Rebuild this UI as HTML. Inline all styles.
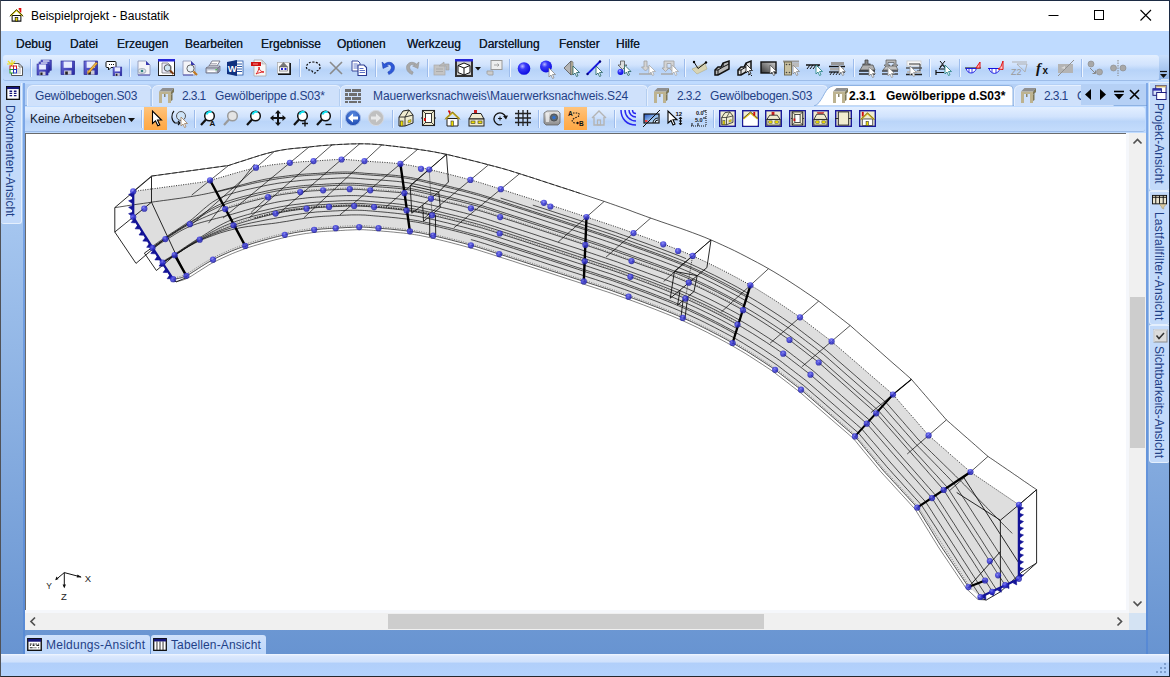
<!DOCTYPE html>
<html lang="de">
<head>
<meta charset="utf-8">
<title>Beispielprojekt - Baustatik</title>
<style>
*{box-sizing:border-box;margin:0;padding:0}
html,body{width:1170px;height:677px;overflow:hidden;background:#6b97d2;font-family:"Liberation Sans","DejaVu Sans",sans-serif;font-size:12px;color:#000}
#win{position:absolute;left:0;top:0;width:1170px;height:677px;background:linear-gradient(to bottom,#b9d6f9 81px,#6894d1 652px);border:1px solid #1c2b44;border-left-color:#505258;border-bottom-color:#26282c;overflow:hidden}
.edge{position:absolute;top:82px;width:2px;height:571px;background:rgba(70,125,215,.5)}
.abs{position:absolute}
svg{position:absolute;overflow:visible}
#title{left:0;top:0;width:1168px;height:30px;background:#fff}
#title .t{left:30px;top:8px;font-size:12px;color:#000}
#menu{left:0;top:30px;width:1168px;height:25px;background:#bfdbff}
#menu span{position:absolute;top:6px;font-size:12px;color:#15202f;text-shadow:0 0 0.4px #15202f}
#tb1{left:0;top:55px;width:1168px;height:28px;background:#bfdbff}
#tb1 .in{left:2px;top:-1px;width:1156px;height:25px;border-radius:3px;background:linear-gradient(#e3efff 0%,#d1e3fd 40%,#b7d3f8 60%,#c4dcfc 100%);box-shadow:0 1px 0 #9dbce8}
#tb1 .opt{left:1158px;top:-1px;width:10px;height:25px;background:linear-gradient(#c9dffc,#8fb4e6);border-radius:0 3px 3px 0}
.sep{position:absolute;width:2px;height:18px;top:4px;border-left:1px solid #9dbcec;border-right:1px solid #eef5ff}
#tabs{left:24px;top:83px;width:1122px;height:22px;background:#b5d0f5}
.tab{position:absolute;top:1px;height:21px;font-size:12px;color:#1f3f86;white-space:pre}
.tab span{position:absolute;top:4px}
#tb2{left:24px;top:105px;width:1122px;height:27px;background:#bfdbff}
#tb2 .in{left:0px;top:1px;width:1120px;height:24px;border-radius:0 3px 3px 0;background:linear-gradient(#e3efff 0%,#d1e3fd 40%,#bad5f9 60%,#c4dcfc 100%);box-shadow:0 1px 0 #9dbce8}
.hot{position:absolute;top:1px;width:23px;height:23px;background:linear-gradient(#ffc47c,#ffb35c 50%,#ffa844);}
#canvas{left:24px;top:132px;width:1101px;height:477px;background:#fff;border-left:1px solid #6a6a6a;border-top:1px solid #6a6a6a;overflow:hidden}
#strip{left:24px;top:132px;width:1104px;height:480px;background:#f5f7fb}
#vs{left:1128px;top:132px;width:17px;height:480px;background:#f0f0f0}
#hs{left:24px;top:612px;width:1104px;height:17px;background:#f0f0f0}
.thumb{position:absolute;background:#cdcdcd}
#corner{left:1128px;top:612px;width:17px;height:17px;background:#d4e3f3}
#status{left:0;top:653px;width:1168px;height:22px;background:linear-gradient(#f2f7ff 0,#dbe8fd 2px,#cfe1fc 36%,#b1cffa 42%,#b4d3fd 100%)}
.vt{position:absolute;background:#c3dafa;border:1px solid #e4effd;border-radius:0 0 3px 3px}
.vt span{position:absolute;writing-mode:vertical-rl;font-size:12px;color:#1f3f86;white-space:pre;left:2px}
.btab{position:absolute;top:634px;height:20px;background:linear-gradient(#cfe1fb,#bcd6fa);border-radius:3px 3px 0 0;font-size:12px;color:#1f3f86}
.btab span{position:absolute;top:3px}
</style>
</head>
<body>
<div id="win">
  <div id="title" class="abs">
    <svg style="left:8px;top:7px" width="15" height="14" viewBox="0 0 17 16"><path d="M11 1h2v4" stroke="#e01010" stroke-width="2" fill="none"/><path d="M3.500 8.500h10V15h-10z" fill="#fff" stroke="#111" stroke-width="1.200"/><path d="M1.500 9L8.500 2.500 15.500 9" fill="none" stroke="#f0e000" stroke-width="1.600"/><path d="M.8 9.500L8.500 2 16.200 9.500" fill="none" stroke="#111" stroke-width="1"/><rect x="7" y="11" width="3" height="4" fill="#f0e000" stroke="#111" stroke-width=".8"/></svg>
    <span class="abs t">Beispielprojekt - Baustatik</span>
    <svg style="left:1047px;top:6px" width="110" height="16" viewBox="0 0 110 16" fill="none" stroke="#000" stroke-width="1"><path d="M0.500 8.500H10.500"/><rect x="46.500" y="3.500" width="9" height="9"/><path d="M92.500 3L103 13.500M103 3L92.500 13.500" stroke-width="1.1"/></svg>
  </div>
  <div id="menu" class="abs">
    <span style="left:15px">Debug</span><span style="left:69px">Datei</span><span style="left:116px">Erzeugen</span><span style="left:184px">Bearbeiten</span><span style="left:260px">Ergebnisse</span><span style="left:336px">Optionen</span><span style="left:406px">Werkzeug</span><span style="left:478px">Darstellung</span><span style="left:558px">Fenster</span><span style="left:615px">Hilfe</span>
  </div>
  <div id="tb1" class="abs"><div class="abs in"></div><div class="abs opt"></div>
  <svg width="0" height="0"><defs><linearGradient id="fl" x1="0" y1="0" x2="1" y2="1"><stop offset="0" stop-color="#7070dc"/><stop offset="1" stop-color="#2626a0"/></linearGradient><radialGradient id="bl" cx="38%" cy="32%" r="70%"><stop offset="0" stop-color="#b8b8ff"/><stop offset=".35" stop-color="#3a3af8"/><stop offset="1" stop-color="#0a0ae0"/></radialGradient></defs></svg>
<svg style="left:6px;top:4px" width="16" height="16" viewBox="0 0 16 16"><path d="M4.500 3.500h7.500l3.500 3.500v8.500h-11z" fill="#fff" stroke="#555" stroke-width="1"/><path d="M12 3.500v3.500h3.500" fill="none" stroke="#555" stroke-width=".8"/><path d="M10 9h4M10 11h4M10 13h4" stroke="#999" stroke-width=".8"/><rect x="3" y="6" width="3.5" height="3.5" fill="#fff" stroke="#d02020"/><rect x="6.5" y="6" width="3" height="3.5" fill="#fff" stroke="#d02020"/><rect x="3" y="9.5" width="3.5" height="3.5" fill="#fff" stroke="#20a020"/><rect x="6.5" y="9.5" width="3" height="3.5" fill="#fff" stroke="#2030c0"/><path d="M1 1l4 4M5 0v5M0 4h5M8 1l-3 4" stroke="#f0e020" stroke-width="1.2"/></svg>
<div class="sep" style="left:29px;top:3px;height:18px"></div>
<svg style="left:36px;top:4px" width="16" height="16" viewBox="0 0 16 16"><g transform="translate(4 0) scale(0.8)"><rect x="0" y="0" width="13" height="13" fill="url(#fl)" stroke="#24248e" stroke-width=".6"/><rect x="2.5" y="0.5" width="8" height="6" fill="#e8ecff"/><rect x="3" y="9" width="7" height="4" fill="#c8c8d8"/><rect x="4" y="10" width="2.5" height="3" fill="#222"/></g><g transform="translate(2 2) scale(0.8)"><rect x="0" y="0" width="13" height="13" fill="url(#fl)" stroke="#24248e" stroke-width=".6"/><rect x="2.5" y="0.5" width="8" height="6" fill="#e8ecff"/><rect x="3" y="9" width="7" height="4" fill="#c8c8d8"/><rect x="4" y="10" width="2.5" height="3" fill="#222"/></g><g transform="translate(0 4) scale(0.85)"><rect x="0" y="0" width="13" height="13" fill="url(#fl)" stroke="#24248e" stroke-width=".6"/><rect x="2.5" y="0.5" width="8" height="6" fill="#e8ecff"/><rect x="3" y="9" width="7" height="4" fill="#c8c8d8"/><rect x="4" y="10" width="2.5" height="3" fill="#222"/></g></svg>
<svg style="left:59px;top:4px" width="16" height="16" viewBox="0 0 16 16"><g transform="translate(1 1) scale(1.05)"><rect x="0" y="0" width="13" height="13" fill="url(#fl)" stroke="#24248e" stroke-width=".6"/><rect x="2.5" y="0.5" width="8" height="6" fill="#e8ecff"/><rect x="3" y="9" width="7" height="4" fill="#c8c8d8"/><rect x="4" y="10" width="2.5" height="3" fill="#222"/></g></svg>
<svg style="left:82px;top:4px" width="16" height="16" viewBox="0 0 16 16"><g transform="translate(1 1) scale(1.05)"><rect x="0" y="0" width="13" height="13" fill="url(#fl)" stroke="#24248e" stroke-width=".6"/><rect x="2.5" y="0.5" width="8" height="6" fill="#e8ecff"/><rect x="3" y="9" width="7" height="4" fill="#c8c8d8"/><rect x="4" y="10" width="2.5" height="3" fill="#222"/></g><path d="M14.5 3.5l-8 9-2 1 .5-2.2 8-9z" fill="#f4b942" stroke="#a86810" stroke-width=".7"/></svg>
<svg style="left:105px;top:4px" width="16" height="16" viewBox="0 0 16 16"><path d="M1 1.5h8a1 1 0 011 1v4a1 1 0 01-1 1H5l-2.5 2.5V7.500H1a1 1 0 01-1-1v-4a1 1 0 011-1z" fill="#fff" stroke="#111" stroke-width="1"/><path d="M3 4.500h1M5 4.500h1M7 4.500h1" stroke="#111"/><g transform="translate(7 7) scale(0.68)"><rect x="0" y="0" width="13" height="13" fill="url(#fl)" stroke="#24248e" stroke-width=".6"/><rect x="2.5" y="0.5" width="8" height="6" fill="#e8ecff"/><rect x="3" y="9" width="7" height="4" fill="#c8c8d8"/><rect x="4" y="10" width="2.5" height="3" fill="#222"/></g></svg>
<div class="sep" style="left:128px;top:3px;height:18px"></div>
<svg style="left:135px;top:4px" width="16" height="16" viewBox="0 0 16 16"><path d="M2 1h8l4 4v10H2z" fill="#f4f4f8" stroke="#8890b0" stroke-width=".8"/><path d="M10 1v4h4z" fill="#3838b0"/><ellipse cx="6" cy="11" rx="4" ry="2.5" fill="#e0e4ea" stroke="#8a98a8" stroke-width=".7"/><circle cx="6" cy="11" r="1.3" fill="#308080"/><path d="M2 15h12" stroke="#5050b0" stroke-width="1"/></svg>
<svg style="left:157px;top:3px" width="18" height="18" viewBox="0 0 18 18"><rect x=".5" y=".5" width="16" height="16" fill="#fff" stroke="#222" stroke-width="1"/><rect x="0" y="0" width="17" height="2.500" fill="#2828d8"/><path d="M4 4h6l3 3v7H4z" fill="#eef" stroke="#666" stroke-width=".7"/><circle cx="9.500" cy="9" r="3.300" fill="#cfe6f4" stroke="#555" stroke-width="1"/><path d="M12 11.500l3.500 3.500" stroke="#7a3a10" stroke-width="2"/></svg>
<svg style="left:181px;top:4px" width="16" height="16" viewBox="0 0 16 16"><path d="M1 1h8l4 4v10H1z" fill="#f4f4f8" stroke="#8890b0" stroke-width=".8"/><path d="M9 1v4h4z" fill="#3838b0"/><circle cx="8.500" cy="8.500" r="3.600" fill="#eaf2f8" stroke="#666" stroke-width="1"/><path d="M11.500 11.500l3.500 3.500" stroke="#c07820" stroke-width="2.200"/><path d="M1 15h10" stroke="#5050b0"/></svg>
<svg style="left:204px;top:4px" width="16" height="16" viewBox="0 0 16 16"><path d="M4 6l3-5h8l-3 5z" fill="#fff" stroke="#667" stroke-width=".8"/><path d="M6 3.500h6M5.500 5h6" stroke="#889" stroke-width=".6"/><path d="M1 8l3-2h11l-2 2z" fill="#d8dde8" stroke="#778" stroke-width=".7"/><path d="M1 8h12v5H1z" fill="#c4cad8" stroke="#667" stroke-width=".8"/><path d="M13 8l2-2v5l-2 2z" fill="#9aa4b8" stroke="#667" stroke-width=".7"/><rect x="2.500" y="10.500" width="8" height="1.500" fill="#fff"/><rect x="10.500" y="9" width="1.300" height="1.300" fill="#30c030"/></svg>
<svg style="left:226px;top:4px" width="16" height="16" viewBox="0 0 16 16"><rect x="8" y="1" width="8" height="14" fill="#fff" stroke="#2a58a8" stroke-width=".8"/><path d="M10 4h5M10 6.500h5M10 9h5M10 11.500h5" stroke="#2a58a8" stroke-width="1"/><path d="M0 2l10-2v16l-10-2z" fill="#10307e"/><text x="0.800" y="12" font-family="Liberation Sans,sans-serif" font-weight="bold" font-size="9.500" fill="#fff">W</text></svg>
<svg style="left:250px;top:4px" width="16" height="16" viewBox="0 0 16 16"><path d="M3 0h8l4 4v12H3z" fill="#f6f6f6" stroke="#aaa" stroke-width=".8"/><path d="M11 0v4h4z" fill="#ddd" stroke="#aaa" stroke-width=".6"/><rect x="0" y="2" width="10" height="4" fill="#d01010"/><path d="M2 4h5" stroke="#ffb0b0" stroke-width=".8"/><path d="M5 14c2-2 3-5 3-7 0 3 2 5 5 5-3 0-6 1-8 2z" fill="none" stroke="#e02020" stroke-width="1"/></svg>
<svg style="left:275px;top:4px" width="16" height="16" viewBox="0 0 16 16"><rect x="1.500" y="2.500" width="12" height="11" fill="#f6f6f6" stroke="#aaa" stroke-width=".7"/><path d="M14.200 3v11.300H2" stroke="#111" stroke-width="1.500" fill="none"/><path d="M3 7l4.500-5L12 7z" fill="#777"/><rect x="3.500" y="7" width="8" height="4" fill="#fff" stroke="#555" stroke-width=".6"/><rect x="5" y="8" width="2" height="2" fill="#2020d0"/><rect x="8.500" y="8" width="2" height="2" fill="#2020d0"/></svg>
<div class="sep" style="left:298px;top:3px;height:18px"></div>
<svg style="left:304px;top:4px" width="16" height="16" viewBox="0 0 16 16"><path d="M2 9c-2-3 1-7 6-7s8 3 7 6-3 2-4 4-3 1-4-1-3 0-5-2z" fill="none" stroke="#111" stroke-width="1.200" stroke-dasharray="2 1.500"/></svg>
<svg style="left:327px;top:4px" width="16" height="16" viewBox="0 0 16 16"><path d="M2 2l12 12M14 2L2 14" stroke="#8a8a8a" stroke-width="1.600"/></svg>
<svg style="left:350px;top:4px" width="16" height="16" viewBox="0 0 16 16"><path d="M1 1h6l2 2v8H1z" fill="#fff" stroke="#3a4a9c" stroke-width="1"/><path d="M2.500 4h4M2.500 6h5M2.500 8h5" stroke="#5a70c8" stroke-width=".9"/><path d="M7 5h6l2.500 2.500v8H7z" fill="#fff" stroke="#2a3a90" stroke-width="1.100"/><path d="M8.500 8.500h4M8.500 10.500h5.500M8.500 12.500h5.500" stroke="#4a60c0" stroke-width=".9"/></svg>
<div class="sep" style="left:374px;top:3px;height:18px"></div>
<svg style="left:380px;top:4px" width="16" height="16" viewBox="0 0 16 16"><path d="M1 2l1 6.500 5.500-2.500-2.200-.8c2-1.500 5-.5 5 2.300 0 2-1.500 3.500-3.500 4.500l1 2.500c4-1.500 5.700-4 5.700-7 0-5-6-7-10-3.500z" fill="#2d58d8" stroke="#1838a8" stroke-width=".5"/></svg>
<svg style="left:403px;top:4px" width="16" height="16" viewBox="0 0 16 16"><path d="M15 2l-1 6.500-5.500-2.500 2.200-.8c-2-1.500-5-.5-5 2.300 0 2 1.500 3.500 3.500 4.500l-1 2.500c-4-1.500-5.700-4-5.700-7 0-5 6-7 10-3.500z" fill="#a8a8a8" stroke="#8c8c8c" stroke-width=".5"/></svg>
<div class="sep" style="left:426px;top:3px;height:18px"></div>
<svg style="left:432px;top:4px" width="16" height="16" viewBox="0 0 16 16"><rect x="1" y="5" width="11" height="10" fill="#c4c4c4" stroke="#aaa" stroke-width=".7"/><path d="M3 9h7M3 11.500h7" stroke="#aaa"/><path d="M6 6l5-4v2h5v6h-3V6z" fill="#b8b8b8" stroke="#a0a0a0" stroke-width=".6"/></svg>
<svg style="left:454px;top:3px" width="28" height="18" viewBox="0 0 28 18"><rect x="1" y="1" width="16" height="16" fill="#cfcfcf" stroke="#333" stroke-width="2"/><rect x="0" y="0" width="18" height="2.500" fill="#2828d8"/><path d="M9 4l6 2.500v7L9 16l-6-2.500v-7z" fill="#fff" stroke="#111" stroke-width="1"/><path d="M3 6.500L9 9l6-2.500M9 9v7" fill="none" stroke="#111" stroke-width="1"/><path d="M20 8h6l-3 3.500z" fill="#111"/></svg>
<svg style="left:485px;top:4px" width="16" height="16" viewBox="0 0 16 16"><rect x="5" y="0.500" width="11" height="9" fill="#eee" stroke="#999" stroke-width="1"/><path d="M8 5h5l-1.500-1.500M13 5l-1.500 1.500" fill="none" stroke="#999" stroke-width=".9"/><path d="M1 11h6v4H2.500L1 13.500z" fill="#ccc" stroke="#999" stroke-width=".8"/></svg>
<div class="sep" style="left:508px;top:3px;height:18px"></div>
<svg style="left:515px;top:4px" width="16" height="16" viewBox="0 0 16 16"><circle cx="8" cy="8.500" r="6.300" fill="url(#bl)"/></svg>
<svg style="left:538px;top:4px" width="16" height="16" viewBox="0 0 16 16"><circle cx="7" cy="6.500" r="6" fill="url(#bl)"/><path d="M10 8l0 9 2-2 1.5 3.5 1.5-.7-1.5-3.3 3 0z" fill="#fff" stroke="#888" stroke-width=".8"/></svg>
<svg style="left:562px;top:4px" width="16" height="16" viewBox="0 0 16 16"><path d="M1 8l7-7v14z" fill="#b4b4b4" stroke="#555" stroke-width=".8"/><path d="M8 1v14l2-1V2z" fill="#cfc5a8" stroke="#555" stroke-width=".6"/><path d="M10 6l0 9 2-2 1.5 3.5 1.5-.7-1.5-3.3 3 0z" fill="#fff" stroke="#206060" stroke-width=".8"/></svg>
<svg style="left:585px;top:4px" width="16" height="16" viewBox="0 0 16 16"><path d="M1.500 14L14 1.500" stroke="#1818e0" stroke-width="1.800"/><circle cx="1.500" cy="14" r="1.200" fill="#000080"/><circle cx="14" cy="1.500" r="1.200" fill="#000080"/><path d="M10 6l0 9 2-2 1.5 3.5 1.5-.7-1.5-3.3 3 0z" fill="#fff" stroke="#206060" stroke-width=".8"/></svg>
<div class="sep" style="left:608px;top:3px;height:18px"></div>
<svg style="left:615px;top:4px" width="16" height="16" viewBox="0 0 16 16"><path d="M4.500 1h4v4h2.500l-4.500 4.500L2 5h2.500z" fill="#ddd" stroke="#555" stroke-width=".8"/><circle cx="4.500" cy="12" r="3" fill="url(#bl)"/><path d="M8.5 5l0 9 2-2 1.5 3.5 1.5-.7-1.5-3.3 3 0z" fill="#fff" stroke="#206060" stroke-width=".8"/></svg>
<svg style="left:638px;top:4px" width="16" height="16" viewBox="0 0 16 16"><path d="M5 1h3v6h2.500L6.500 11 2.500 7H5z" fill="#d4d4d4" stroke="#a0a0a0" stroke-width=".8"/><path d="M0 14h14" stroke="#a8a8a8" stroke-width="1.500"/><path d="M10 5l0 9 2-2 1.5 3.5 1.5-.7-1.5-3.3 3 0z" fill="#fff" stroke="#aaa" stroke-width=".8"/></svg>
<svg style="left:660px;top:4px" width="16" height="16" viewBox="0 0 16 16"><path d="M3 1h10v7h2l-3.500 3.500L8 8h2V3.500H6V8h2l-3.500 3.500L1 8h2z" fill="#d4d4d4" stroke="#a0a0a0" stroke-width=".8"/><path d="M0 14h12" stroke="#a8a8a8" stroke-width="1.500"/><path d="M11 5l0 9 2-2 1.5 3.5 1.5-.7-1.5-3.3 3 0z" fill="#fff" stroke="#aaa" stroke-width=".8"/></svg>
<div class="sep" style="left:683px;top:3px;height:18px"></div>
<svg style="left:690px;top:4px" width="16" height="16" viewBox="0 0 16 16"><path d="M1 9l5 5 10-5-2-6-8 4z" fill="#d8d4b4" stroke="#b4ac84" stroke-width=".6"/><path d="M3 2l4 6.500L15 2.500" fill="none" stroke="#111" stroke-width="1"/><circle cx="3" cy="2" r="1.200"/><circle cx="15" cy="2.500" r="1.200"/></svg>
<svg style="left:713px;top:4px" width="16" height="16" viewBox="0 0 16 16"><path d="M1 10l3-3h3l2-4 6-2v8l-11 6h-3z" fill="#b8b8b8" stroke="#111" stroke-width="1.500"/><path d="M1 10h3v5M4 10l5-3 .3-4M9 7l6-3" fill="none" stroke="#111" stroke-width="1"/></svg>
<svg style="left:736px;top:4px" width="16" height="16" viewBox="0 0 16 16"><path d="M1 10l3-3h3l2-4 5-2v8l-10 6h-3z" fill="#e0e0e0" stroke="#111" stroke-width="1.500"/><path d="M1 10h3v5M4 10l5-3 .3-4" fill="none" stroke="#111" stroke-width="1"/><path d="M9 4l0 9 2-2 1.5 3.5 1.5-.7-1.5-3.3 3 0z" fill="#fff" stroke="#111" stroke-width=".8"/><path d="M11 15l2-1M14 16l1-1" stroke="#111"/></svg>
<svg style="left:759px;top:4px" width="16" height="16" viewBox="0 0 16 16"><defs><linearGradient id="dr" x1="0" y1="1" x2="1" y2="0"><stop offset="0" stop-color="#333"/><stop offset="1" stop-color="#d0d0d0"/></linearGradient></defs><rect x="1" y="2" width="15" height="11" fill="url(#dr)" stroke="#111" stroke-width="1.400"/><path d="M10 5l0 9 2-2 1.5 3.5 1.5-.7-1.5-3.3 3 0z" fill="#fff" stroke="#555" stroke-width=".8"/></svg>
<svg style="left:782px;top:4px" width="16" height="16" viewBox="0 0 16 16"><path d="M0 1.500h16" stroke="#999" stroke-width="2"/><rect x="1.500" y="2" width="7" height="13" fill="#c8c0a0" stroke="#6a6448" stroke-width=".9"/><circle cx="3.500" cy="4.500" r=".8" fill="#444"/><circle cx="6.500" cy="4.500" r=".8" fill="#444"/><circle cx="3.500" cy="12.500" r=".8" fill="#444"/><circle cx="6.500" cy="12.500" r=".8" fill="#444"/><rect x="9" y="3" width="7" height="4" fill="#bbb"/><path d="M10 5l0 9 2-2 1.5 3.5 1.5-.7-1.5-3.3 3 0z" fill="#fff" stroke="#888" stroke-width=".8"/></svg>
<svg style="left:805px;top:4px" width="16" height="16" viewBox="0 0 16 16"><path d="M0 5h14" stroke="#111" stroke-width="1.500"/><path d="M1 9l3-4M4 9l3-4M7 9l3-4M10 9l3-4" stroke="#111" stroke-width="1"/><path d="M10 5l0 9 2-2 1.5 3.5 1.5-.7-1.5-3.3 3 0z" fill="#fff" stroke="#208080" stroke-width=".8"/></svg>
<svg style="left:828px;top:4px" width="16" height="16" viewBox="0 0 16 16"><path d="M2 2h13v3H2z" fill="#999"/><path d="M0 6.500h16" stroke="#111" stroke-width="1.500"/><rect x="1" y="8" width="14" height="2.500" fill="#aaa"/><path d="M0 12h16" stroke="#111" stroke-width="1.300"/><path d="M1 15l2-3M4 15l2-3M7 15l2-3M10 15l2-3" stroke="#111" stroke-width=".9"/><path d="M10 5l0 9 2-2 1.5 3.5 1.5-.7-1.5-3.3 3 0z" fill="#fff" stroke="#888" stroke-width=".8"/></svg>
<div class="sep" style="left:852px;top:3px;height:18px"></div>
<svg style="left:858px;top:4px" width="16" height="16" viewBox="0 0 16 16"><path d="M6 0h3v4h2.500L7.500 8 3.500 4H6z" fill="#888" stroke="#333" stroke-width=".7"/><path d="M1 10l3-5h10l2 5z" fill="#b0b0b0" stroke="#444" stroke-width=".7"/><path d="M0 11h16M0 14h16" stroke="#222" stroke-width="1.600"/><path d="M10 7l0 9 2-2 1.5 3.5 1.5-.7-1.5-3.3 3 0z" fill="#fff" stroke="#888" stroke-width=".8"/></svg>
<svg style="left:881px;top:4px" width="16" height="16" viewBox="0 0 16 16"><path d="M4 0h10v5h2l-3 3-3-3h2V2.500H6V5h2L5 8 2 5h2z" fill="#b8b8b8" stroke="#555" stroke-width=".7"/><path d="M1 10l3-4h10l2 4z" fill="#c0c0c0" stroke="#555" stroke-width=".7"/><path d="M0 11h16M0 14h16" stroke="#444" stroke-width="1.500"/><path d="M6 7l0 9 2-2 1.5 3.5 1.5-.7-1.5-3.3 3 0z" fill="#fff" stroke="#999" stroke-width=".8"/></svg>
<svg style="left:905px;top:4px" width="16" height="16" viewBox="0 0 16 16"><rect x="1" y="1" width="14" height="5" fill="#f8f8f8" stroke="#ccc" stroke-width=".8"/><path d="M3 4h11v7h-3l1.500 1.500" fill="none" stroke="#333" stroke-width="1"/><path d="M0 8h16" stroke="#555" stroke-width="1.500"/><path d="M1 11h14v2H1z" fill="#bbb"/><path d="M0 14.500h16" stroke="#222" stroke-width="1.500"/><path d="M4 6l0 9 2-2 1.5 3.5 1.5-.7-1.5-3.3 3 0z" fill="#fff" stroke="#999" stroke-width=".8"/></svg>
<div class="sep" style="left:928px;top:3px;height:18px"></div>
<svg style="left:934px;top:4px" width="16" height="16" viewBox="0 0 16 16"><path d="M1 10v5M1 12.500h8" stroke="#111" stroke-width="1.200" fill="none"/><path d="M5 1l5 6M10 1L5 7M4 9h7l-3.500-4z" stroke="#111" stroke-width="1" fill="none"/><path d="M10 5l0 9 2-2 1.5 3.5 1.5-.7-1.5-3.3 3 0z" fill="#fff" stroke="#208080" stroke-width=".8"/></svg>
<div class="sep" style="left:958px;top:3px;height:18px"></div>
<svg style="left:964px;top:4px" width="16" height="16" viewBox="0 0 16 16"><path d="M0 8h16" stroke="#111" stroke-width="1"/><path d="M1 8.500c2 6 8 6 10.500 0z" fill="#fff" stroke="#1010e0" stroke-width=".9"/><path d="M4 8.500v4M7 8.500v4.500" stroke="#1010e0" stroke-width=".8"/><path d="M11 8l4-6v6z" fill="#ffb0b0" stroke="#e01010" stroke-width="1"/></svg>
<svg style="left:987px;top:4px" width="16" height="16" viewBox="0 0 16 16"><path d="M1 8.500c2 6.500 9 6.500 11 0z" fill="#fff" stroke="#1010e0" stroke-width=".9"/><path d="M0 8.500h12" stroke="#1010e0" stroke-width=".9"/><path d="M4 8.500v4M8 8.500v4.500" stroke="#1010e0" stroke-width=".8"/><path d="M10 9c2-1 3-2 3.500-4l1.500-4v8.500z" fill="#ffd0d0" stroke="#e01010" stroke-width="1"/></svg>
<svg style="left:1010px;top:4px" width="16" height="16" viewBox="0 0 16 16"><path d="M1 2h15M6 4h10" stroke="#b0b0b0" stroke-width="1.200"/><path d="M6 4c2 3 5 4 8 8l2-8" fill="none" stroke="#b0b0b0" stroke-width="1"/><text x="0" y="15" font-family="Liberation Sans,sans-serif" font-size="9" fill="#999">Z2</text></svg>
<svg style="left:1034px;top:4px" width="16" height="16" viewBox="0 0 16 16"><text x="1" y="13" font-family="Liberation Serif,serif" font-style="italic" font-weight="bold" font-size="15" fill="#111">f</text><text x="7.500" y="13.500" font-family="Liberation Sans,sans-serif" font-weight="bold" font-size="10" fill="#111">x</text></svg>
<svg style="left:1057px;top:4px" width="16" height="16" viewBox="0 0 16 16"><rect x="0" y="4" width="15" height="9" fill="#b4b4b4"/><path d="M0 16L16 0" stroke="#909090" stroke-width="1"/><path d="M3 8l4-2v3z" fill="#d8d8d8"/></svg>
<div class="sep" style="left:1080px;top:3px;height:18px"></div>
<svg style="left:1086px;top:4px" width="16" height="16" viewBox="0 0 16 16"><circle cx="4" cy="4" r="3" fill="#a8a8a8" stroke="#888" stroke-width=".6"/><circle cx="12.500" cy="12" r="3" fill="#a8a8a8" stroke="#888" stroke-width=".6"/><path d="M3 8l5.500 5.500M8.500 13.500v-3M8.500 13.500h-3" stroke="#888" stroke-width="1" fill="none"/></svg>
<svg style="left:1109px;top:4px" width="16" height="16" viewBox="0 0 16 16"><circle cx="3.500" cy="8" r="3" fill="#a8a8a8" stroke="#888" stroke-width=".6"/><circle cx="13" cy="8" r="3" fill="#a8a8a8" stroke="#888" stroke-width=".6"/><path d="M8 0v16" stroke="#888" stroke-width="1" stroke-dasharray="1.500 1"/></svg>
<svg style="left:1159px;top:15px" width="7" height="9" viewBox="0 0 7 9"><path d="M0 0.500h7" stroke="#111" stroke-width="1.200"/><path d="M0 3h7L3.500 7z" fill="#111"/><path d="M1 8.500h7" stroke="#fff" stroke-width=".8" opacity=".8"/></svg>
  </div>
  <div id="tabs" class="abs">
  <div class="abs" style="left:0;top:21px;width:1122px;height:1px;background:#8db2e3"></div>
<div class="tab" style="left:2px;width:124px;"><svg style="left:0;top:0" width="126" height="21" viewBox="0 0 126 21"><path d="M.5 21V6Q.5 1 6 .5H120 Q124 .5 124 4V21" fill="#cfe1fb" stroke="#e6f0fe" stroke-width="1"/><path d="M124 4V21" stroke="#8db2e3" stroke-width="1"/></svg><span style="left:8px;letter-spacing:-0.2px">Gewölbebogen.S03</span></div>
<div class="tab" style="left:127px;width:188px;"><svg style="left:0;top:0" width="190" height="21" viewBox="0 0 190 21"><path d="M.5 21V6Q.5 1 6 .5H184 Q188 .5 188 4V21" fill="#cfe1fb" stroke="#e6f0fe" stroke-width="1"/><path d="M188 4V21" stroke="#8db2e3" stroke-width="1"/></svg><svg style="left:5px;top:3px" width="17" height="15" viewBox="0 0 17 15"><path d="M2 3.500l3.500-3.500h11.500l-3 3.500z" fill="#909090"/><path d="M2 3.500h12v2.500H2z" fill="#bdb390"/><path d="M14 3.500l3-3.500v4l-3 3z" fill="#7c7658"/><path d="M2 6h3v9H2zM11 6H14v9h-3z" fill="#bdb390"/><path d="M14 7l1.500-1.500V12L14 13z" fill="#7c7658"/><path d="M7 6h1.500v3H7z" fill="#8a8468"/></svg><span style="left:30px;letter-spacing:-0.6px">2.3.1</span><span style="left:63px;letter-spacing:-0.2px">Gewölberippe d.S03*</span></div>
<div class="tab" style="left:315px;width:307px;"><svg style="left:0;top:0" width="309" height="21" viewBox="0 0 309 21"><path d="M.5 21V6Q.5 1 6 .5H303 Q307 .5 307 4V21" fill="#cfe1fb" stroke="#e6f0fe" stroke-width="1"/><path d="M307 4V21" stroke="#8db2e3" stroke-width="1"/></svg><svg style="left:5px;top:3px" width="17" height="15" viewBox="0 0 17 15"><path d="M0 1h6v3H0zM7 1h9v3H7zM0 5h3v3H0zM4 5h8v3H4zM13 5h3v3h-3zM0 9h6v3H0zM7 9h9v3H7zM0 13h3v2H0zM4 13h8v2H4zM13 13h3v2h-3z" fill="#6e6e6e"/></svg><span style="left:33px;letter-spacing:-0.09px">Mauerwerksnachweis\Mauerwerksnachweis.S24</span></div>
<div class="tab" style="left:622px;width:180px;"><svg style="left:0;top:0" width="182" height="21" viewBox="0 0 182 21"><path d="M.5 21V6Q.5 1 6 .5H176 Q180 .5 180 4V21" fill="#cfe1fb" stroke="#e6f0fe" stroke-width="1"/><path d="M180 4V21" stroke="#8db2e3" stroke-width="1"/></svg><svg style="left:5px;top:3px" width="17" height="15" viewBox="0 0 17 15"><path d="M2 3.500l3.500-3.500h11.500l-3 3.500z" fill="#909090"/><path d="M2 3.500h12v2.500H2z" fill="#bdb390"/><path d="M14 3.500l3-3.500v4l-3 3z" fill="#7c7658"/><path d="M2 6h3v9H2zM11 6H14v9h-3z" fill="#bdb390"/><path d="M14 7l1.500-1.500V12L14 13z" fill="#7c7658"/><path d="M7 6h1.500v3H7z" fill="#8a8468"/></svg><span style="left:30px;letter-spacing:-0.6px">2.3.2</span><span style="left:63px;letter-spacing:-0.2px">Gewölbebogen.S03</span></div>
<div class="tab" style="left:989px;width:100px;overflow:hidden;"><svg style="left:0;top:0" width="102" height="21" viewBox="0 0 102 21"><path d="M.5 21V6Q.5 1 6 .5H96 Q100 .5 100 4V21" fill="#cfe1fb" stroke="#e6f0fe" stroke-width="1"/><path d="M100 4V21" stroke="#8db2e3" stroke-width="1"/></svg><svg style="left:5px;top:3px" width="17" height="15" viewBox="0 0 17 15"><path d="M2 3.500l3.500-3.500h11.500l-3 3.500z" fill="#909090"/><path d="M2 3.500h12v2.500H2z" fill="#bdb390"/><path d="M14 3.500l3-3.500v4l-3 3z" fill="#7c7658"/><path d="M2 6h3v9H2zM11 6H14v9h-3z" fill="#bdb390"/><path d="M14 7l1.500-1.500V12L14 13z" fill="#7c7658"/><path d="M7 6h1.500v3H7z" fill="#8a8468"/></svg><span style="left:30px;letter-spacing:-0.6px">2.3.1</span><span style="left:63px;letter-spacing:-0.2px">Gewölberippe</span></div>
<div class="tab" style="left:803px;width:186px;font-weight:bold;color:#000;"><svg style="left:-14px;top:0" width="202" height="21" viewBox="0 0 202 21"><path d="M0 21C8 19 10 4 17 1.500Q19 .5 22 .5H195 Q199 .5 199 4V21z" fill="#fff" stroke="#8db2e3" stroke-width="1"/></svg><svg style="left:3px;top:3px" width="17" height="15" viewBox="0 0 17 15"><path d="M2 3.500l3.500-3.500h11.500l-3 3.500z" fill="#909090"/><path d="M2 3.500h12v2.500H2z" fill="#bdb390"/><path d="M14 3.500l3-3.500v4l-3 3z" fill="#7c7658"/><path d="M2 6h3v9H2zM11 6H14v9h-3z" fill="#bdb390"/><path d="M14 7l1.500-1.500V12L14 13z" fill="#7c7658"/><path d="M7 6h1.500v3H7z" fill="#8a8468"/></svg><span style="left:21px;letter-spacing:0">2.3.1</span><span style="left:58px;letter-spacing:0">Gewölberippe d.S03*</span></div>
<div class="abs" style="left:1056px;top:0px;width:66px;height:21px;background:#b5d0f5"></div>
<svg style="left:1060px;top:5px" width="56" height="12" viewBox="0 0 56 12"><path d="M6 0v11L0 5.500z" fill="#000"/><path d="M15 0v11l6-5.500z" fill="#000"/><path d="M29 2.500h10" stroke="#000" stroke-width="1.600"/><path d="M29 5h10l-5 5.500z" fill="#000"/><path d="M45 1l9 9M54 1l-9 9" stroke="#000" stroke-width="1.600"/></svg>
  </div>
  <div id="tb2" class="abs"><div class="abs in"></div>
  <div class="hot" style="left:119px"></div><div class="hot" style="left:539px"></div>
<span class="abs" style="left:5px;top:6px;font-size:12px;color:#15202f;letter-spacing:-0.1px">Keine Arbeitseben</span><svg style="left:103px;top:12px" width="7" height="4" viewBox="0 0 7 4"><path d="M0 0h7L3.500 4z" fill="#111"/></svg>
<div class="sep" style="left:116px;top:4px;height:18px"></div>
<svg style="left:123px;top:4px" width="16" height="16" viewBox="0 0 16 16"><path d="M4.500 1v12.500l3-2.700 2.300 5 2-.9L9.500 10H13.500z" fill="#fff" stroke="#000" stroke-width="1.100"/></svg>
<svg style="left:146px;top:4px" width="16" height="16" viewBox="0 0 16 16"><circle cx="10" cy="6" r="4.500" fill="#cfe4f8" stroke="#555" stroke-width="1"/><path d="M3 1c-3 3-3 9 1 12h5M9 13l-2-2M9 13l-2 2" fill="none" stroke="#111" stroke-width="1.100"/><path d="M10 7l0 9 2-2 1.5 3.5 1.5-.7-1.5-3.3 3 0z" fill="#fff" stroke="#a08060" stroke-width=".8"/></svg>
<div class="sep" style="left:169px;top:4px;height:18px"></div>
<svg style="left:175px;top:4px" width="16" height="16" viewBox="0 0 16 16"><circle cx="9.500" cy="6" r="4.800" fill="#fff" stroke="#111" stroke-width="1.500"/><path d="M6.500 4.500a4 4 0 015-2.500" stroke="#10e0f0" stroke-width="2" fill="none"/><path d="M6 9.500L1 15" stroke="#111" stroke-width="2.200"/><text x="9.500" y="16" font-family="Liberation Sans,sans-serif" font-weight="bold" font-size="8" fill="#111">A</text></svg>
<svg style="left:198px;top:4px" width="16" height="16" viewBox="0 0 16 16"><circle cx="9.500" cy="6" r="4.800" fill="#e4e4e4" stroke="#9a9a9a" stroke-width="1.500"/><path d="M6 9.500L1 15" stroke="#9a9a9a" stroke-width="2.200"/></svg>
<svg style="left:221px;top:4px" width="16" height="16" viewBox="0 0 16 16"><circle cx="9.500" cy="6" r="4.800" fill="#fff" stroke="#111" stroke-width="1.500"/><path d="M6.500 4.500a4 4 0 015-2.500" stroke="#10e0f0" stroke-width="2" fill="none"/><path d="M6 9.500L1 15" stroke="#111" stroke-width="2.200"/></svg>
<svg style="left:245px;top:4px" width="16" height="16" viewBox="0 0 16 16"><path d="M8 0l3 3.500H9v3.500h3.500V5L16 8l-3.500 3V9H9v3.500h2L8 16l-3-3.500h2V9H3.500v2L0 8l3.500-3v2H7V3.500H5z" fill="#111"/></svg>
<svg style="left:268px;top:4px" width="16" height="16" viewBox="0 0 16 16"><circle cx="9.500" cy="6" r="4.800" fill="#fff" stroke="#111" stroke-width="1.500"/><path d="M6.500 4.500a4 4 0 015-2.500" stroke="#10e0f0" stroke-width="2" fill="none"/><path d="M6 9.500L1 15" stroke="#111" stroke-width="2.200"/><path d="M9 13.500h6M12 10.500v6" stroke="#111" stroke-width="1.400"/></svg>
<svg style="left:291px;top:4px" width="16" height="16" viewBox="0 0 16 16"><circle cx="9.500" cy="6" r="4.800" fill="#fff" stroke="#111" stroke-width="1.500"/><path d="M6.500 4.500a4 4 0 015-2.500" stroke="#10e0f0" stroke-width="2" fill="none"/><path d="M6 9.500L1 15" stroke="#111" stroke-width="2.200"/><path d="M9.500 14.500h6" stroke="#111" stroke-width="1.400"/></svg>
<div class="sep" style="left:315px;top:4px;height:18px"></div>
<svg style="left:320px;top:4px" width="16" height="16" viewBox="0 0 16 16"><defs><radialGradient id="bk" cx="50%" cy="30%" r="70%"><stop offset="0" stop-color="#5b8be0"/><stop offset="1" stop-color="#1c48b0"/></radialGradient></defs><circle cx="8" cy="8" r="7.600" fill="url(#bk)" stroke="#9db8e8" stroke-width="1"/><path d="M3 8l5-4.500v3h5v3H8v3z" fill="#fff"/></svg>
<svg style="left:343px;top:4px" width="16" height="16" viewBox="0 0 16 16"><circle cx="8" cy="8" r="7.600" fill="#c0c0c0" stroke="#d4d8e0" stroke-width="1"/><path d="M13 8L8 3.500v3H3v3h5v3z" fill="#e8e8e8"/></svg>
<div class="sep" style="left:367px;top:4px;height:18px"></div>
<svg style="left:373px;top:4px" width="16" height="16" viewBox="0 0 16 16"><path d="M1 7l4-6 6-1 4 5v8l-8 3H1z" fill="#f0ecd0" stroke="#222" stroke-width="1"/><path d="M1 7h6l4-7M7 7v9M7 7l8-2" fill="none" stroke="#222" stroke-width=".9"/><rect x="2.500" y="11" width="2.500" height="5" fill="#f0e000" stroke="#333" stroke-width=".6"/><path d="M10 10.500l3-1v2.500l-3 1z" fill="#f0e000" stroke="#555" stroke-width=".5"/></svg>
<svg style="left:396px;top:4px" width="16" height="16" viewBox="0 0 16 16"><rect x="1.500" y=".5" width="12" height="15" fill="#f0ecd0" stroke="#222" stroke-width="1.100"/><rect x="4.500" y="3.500" width="6" height="9" fill="#fff" stroke="#222" stroke-width=".9"/><path d="M1.500 .5l3 3M13.500 .5l-3 3M1.500 15.500l3-3M13.500 15.500l-3-3" stroke="#222" stroke-width=".8"/><rect x="3" y="8" width="2" height="3" fill="#d01010"/><path d="M0 8h1.500M13.500 8H15" stroke="#222"/></svg>
<svg style="left:420px;top:4px" width="16" height="16" viewBox="0 0 16 16"><path d="M3 1h2v4" fill="#d01010" stroke="#d01010"/><path d="M2 8.500h11V16H2z" fill="#fff" stroke="#222" stroke-width="1"/><path d="M0.500 9L7.500 2.500 14.500 9" fill="none" stroke="#e0c020" stroke-width="1.800"/><path d="M0 9.500L7.500 2 15 9.500" fill="none" stroke="#333" stroke-width=".6"/><rect x="6" y="11" width="2.500" height="5" fill="#f0e000" stroke="#333" stroke-width=".6"/></svg>
<svg style="left:443px;top:4px" width="16" height="16" viewBox="0 0 16 16"><rect x="6" y="0" width="3" height="5" fill="#c82020"/><path d="M1 9l3-5.500h9L16 9z" fill="#f0ecd0" stroke="#222" stroke-width="1"/><rect x="1" y="9" width="15" height="7" fill="#f0ecd0" stroke="#222" stroke-width="1"/><rect x="3" y="11" width="4" height="2.500" fill="#f0e000" stroke="#333" stroke-width=".6"/><rect x="10" y="11" width="4" height="2.500" fill="#f0e000" stroke="#333" stroke-width=".6"/></svg>
<svg style="left:467px;top:4px" width="16" height="16" viewBox="0 0 16 16"><path d="M10 14.500a6 6 0 11 3.500-8" fill="none" stroke="#111" stroke-width="1.300"/><path d="M11 6l3 3.500 2-4z" fill="#111"/><path d="M6 8.500h4M8 6.500v4" stroke="#111" stroke-width="1"/></svg>
<svg style="left:490px;top:4px" width="16" height="16" viewBox="0 0 16 16"><path d="M0 3.500h16M0 8h16M0 12.500h16M3.500 0v16M8 0v16M12.500 0v16" stroke="#222" stroke-width="1.300"/></svg>
<div class="sep" style="left:513px;top:4px;height:18px"></div>
<svg style="left:518px;top:4px" width="16" height="16" viewBox="0 0 16 16"><defs><linearGradient id="cm" x1="0" y1="0" x2="0" y2="1"><stop offset="0" stop-color="#e8e8e8"/><stop offset="1" stop-color="#8a8a8a"/></linearGradient></defs><path d="M1 3l3-2h11l2 2v10l-2 2H3l-2-2z" fill="url(#cm)" stroke="#666" stroke-width=".8"/><circle cx="11" cy="7.500" r="3.600" fill="#5a6a78" stroke="#444" stroke-width=".8"/><circle cx="11" cy="7.500" r="1.600" fill="#2a70d8"/><rect x="3" y="3" width="3" height="9" fill="#f4f4f4" opacity=".7"/></svg>
<svg style="left:543px;top:4px" width="16" height="16" viewBox="0 0 16 16"><path d="M5 3h4c3 0 3 3 0 4L6 8.500c-3 1.500-2 4 1 4.500h3" fill="none" stroke="#111" stroke-width="1.100" stroke-dasharray="1.500 1.200"/><text x="0" y="6" font-family="Liberation Sans,sans-serif" font-weight="bold" font-size="6.500" fill="#111">A</text><text x="11" y="16" font-family="Liberation Sans,sans-serif" font-weight="bold" font-size="6.500" fill="#111">B</text><path d="M9 11.500l2.500 1.500L9 14.500" fill="#111"/></svg>
<svg style="left:566px;top:4px" width="16" height="16" viewBox="0 0 16 16"><path d="M1 8l7-7 7 7M3 7v8h10V7" fill="none" stroke="#b4b4b4" stroke-width="1.400"/><rect x="6.500" y="10" width="3" height="5" fill="none" stroke="#b4b4b4" stroke-width="1.200"/></svg>
<div class="sep" style="left:589px;top:4px;height:18px"></div>
<svg style="left:595px;top:4px" width="16" height="16" viewBox="0 0 16 16"><path d="M1 0c0 9 6 15 15 15M5 0c0 6 5 11 11 11M9 0c0 4 3 7 7 7M12.500 0c0 2 1.500 3.500 3.500 3.500" fill="none" stroke="#2828f0" stroke-width="1.500"/></svg>
<svg style="left:618px;top:4px" width="16" height="16" viewBox="0 0 16 16"><defs><linearGradient id="dg" x1="0" y1="0" x2="1" y2="1"><stop offset="0" stop-color="#2050c0"/><stop offset=".6" stop-color="#a0c8f0"/><stop offset="1" stop-color="#fff"/></linearGradient></defs><rect x="1" y="4" width="15" height="9" fill="url(#dg)" stroke="#111" stroke-width="1.200"/><path d="M10 13a5 5 0 015-5M12 13a3 3 0 013-3" fill="none" stroke="#111" stroke-width="1"/><rect x="2" y="10" width="2.500" height="2" fill="#f04040"/><path d="M0 17L17 0" stroke="#111" stroke-width="1"/></svg>
<svg style="left:642px;top:4px" width="16" height="16" viewBox="0 0 16 16"><path d="M1 1v12l3-2.500 2 4.500 2-1-2-4.200h4z" fill="#fff" stroke="#000" stroke-width="1.100"/><text x="8.500" y="5.500" font-family="Liberation Sans,sans-serif" font-weight="bold" font-size="6" fill="#111">12</text><path d="M13.500 7v8M12 9l1.500-2L15 9M12 13l1.500 2 1.500-2M12 11h3" stroke="#111" stroke-width="1" fill="none"/></svg>
<svg style="left:665px;top:4px" width="16" height="16" viewBox="0 0 16 16"><text x="6" y="5" font-family="Liberation Sans,sans-serif" font-weight="bold" font-size="5.500" fill="#111">0.0</text><text x="5" y="12" font-family="Liberation Sans,sans-serif" font-weight="bold" font-size="5.500" fill="#111">5.0</text><path d="M16 0v16H0" fill="none" stroke="#111" stroke-width="1" stroke-dasharray="1 1"/><path d="M13 1h3M13 8h3M2 13v3M8 13v3" stroke="#111"/></svg>
<div class="sep" style="left:688px;top:4px;height:18px"></div>
<svg style="left:694px;top:4px" width="17" height="17" viewBox="0 0 18 18"><rect x=".75" y=".75" width="16.500" height="16.500" fill="#f0ecd0" stroke="#1a1a9a" stroke-width="1.500"/><g transform="translate(2 2) scale(.85)"><path d="M1 7l4-6 6-1 4 5v8l-8 3H1z" fill="#f0ecd0" stroke="#222" stroke-width="1"/><path d="M1 7h6l4-7M7 7v9M7 7l8-2" fill="none" stroke="#222" stroke-width=".9"/><rect x="2.500" y="11" width="2.500" height="5" fill="#f0e000" stroke="#333" stroke-width=".6"/><path d="M10 10.500l3-1v2.500l-3 1z" fill="#f0e000" stroke="#555" stroke-width=".5"/></g></svg>
<svg style="left:717px;top:4px" width="17" height="17" viewBox="0 0 18 18"><rect x=".75" y=".75" width="16.500" height="16.500" fill="#f0ecd0" stroke="#1a1a9a" stroke-width="1.500"/><path d="M1.500 9L9 2.500 16.500 9V16.500H1.500z" fill="#fff"/><path d="M1.500 9.500L9 3l7.500 6.500" fill="none" stroke="#e0c020" stroke-width="1.800"/><path d="M1 9L9 2l8 7" fill="none" stroke="#222" stroke-width=".7"/><rect x="12" y="2" width="2" height="4" fill="#d01010"/></svg>
<svg style="left:740px;top:4px" width="17" height="17" viewBox="0 0 18 18"><rect x=".75" y=".75" width="16.500" height="16.500" fill="#f0ecd0" stroke="#1a1a9a" stroke-width="1.500"/><rect x="7" y="2" width="3" height="4" fill="#c82020"/><path d="M2 10l3-4.500h8L16 10z" fill="#f0ecd0" stroke="#222" stroke-width=".9"/><rect x="2" y="10" width="14" height="6" fill="#f0ecd0" stroke="#222" stroke-width=".9"/><rect x="4" y="11.500" width="3.500" height="2.500" fill="#f0e000" stroke="#333" stroke-width=".5"/><rect x="10.500" y="11.500" width="3.500" height="2.500" fill="#f0e000" stroke="#333" stroke-width=".5"/></svg>
<svg style="left:764px;top:4px" width="17" height="17" viewBox="0 0 18 18"><rect x=".75" y=".75" width="16.500" height="16.500" fill="#f0ecd0" stroke="#1a1a9a" stroke-width="1.500"/><rect x="1.500" y="1.500" width="15" height="15" fill="#c0c0b8" opacity=".7"/><g transform="translate(2 1.500) scale(.93)"><rect x="1.500" y=".5" width="12" height="15" fill="#f0ecd0" stroke="#222" stroke-width="1.100"/><rect x="4.500" y="3.500" width="6" height="9" fill="#fff" stroke="#222" stroke-width=".9"/><path d="M1.500 .5l3 3M13.500 .5l-3 3M1.500 15.500l3-3M13.500 15.500l-3-3" stroke="#222" stroke-width=".8"/><rect x="3" y="8" width="2" height="3" fill="#d01010"/><path d="M0 8h1.500M13.500 8H15" stroke="#222"/></g></svg>
<svg style="left:787px;top:4px" width="17" height="17" viewBox="0 0 18 18"><rect x=".75" y=".75" width="16.500" height="16.500" fill="#f0ecd0" stroke="#1a1a9a" stroke-width="1.500"/><path d="M6 4h6l1-1.500H5z" fill="#c82020"/><path d="M2 10l3-5.500h8L16 10z" fill="#f0ecd0" stroke="#222" stroke-width=".9"/><rect x="2" y="10" width="14" height="6" fill="#f0ecd0" stroke="#222" stroke-width=".9"/><rect x="4" y="11.500" width="3.500" height="2.500" fill="#f0e000" stroke="#333" stroke-width=".5"/><rect x="10.500" y="11.500" width="3.500" height="2.500" fill="#f0e000" stroke="#333" stroke-width=".5"/></svg>
<svg style="left:810px;top:4px" width="17" height="17" viewBox="0 0 18 18"><rect x=".75" y=".75" width="16.500" height="16.500" fill="#f0ecd0" stroke="#1a1a9a" stroke-width="1.500"/><rect x="3.500" y="2" width="11" height="14" fill="#f0ecd0" stroke="#222" stroke-width="1"/><path d="M0 9h3.500M14.500 9H18" stroke="#222"/></svg>
<svg style="left:834px;top:4px" width="17" height="17" viewBox="0 0 18 18"><rect x=".75" y=".75" width="16.500" height="16.500" fill="#f0ecd0" stroke="#1a1a9a" stroke-width="1.500"/><rect x="3" y="2" width="2" height="5" fill="#d01010"/><path d="M3.500 9.500h11V16.500h-11z" fill="#fff" stroke="#222" stroke-width=".8"/><path d="M2 10l7-6.500 7 6.500" fill="none" stroke="#e0c020" stroke-width="1.800"/><path d="M1.500 10.500L9 3l7.500 7.500" fill="none" stroke="#333" stroke-width=".6"/><rect x="7.500" y="12" width="2.500" height="4.500" fill="#f0e000" stroke="#333" stroke-width=".6"/></svg>
  </div>
  <div class="edge" style="left:21.5px"></div><div class="edge" style="left:1145px"></div>
  <div id="strip" class="abs"></div>
  <div id="canvas" class="abs"><svg class="abs" id="arch" style="left:0;top:0" width="1102" height="476" viewBox="26 134 1102 476">
<defs><radialGradient id="bd" cx="42%" cy="36%" r="62%"><stop offset="0" stop-color="#8484f8"/><stop offset="0.45" stop-color="#3c3ce4"/><stop offset="1" stop-color="#1a1aa0"/></radialGradient></defs>
<path d="M133.2 191.4 L135.5 191.1 L138.4 190.7 L142.0 190.2 L146.0 189.7 L150.2 189.1 L154.6 188.6 L158.9 188.0 L163.0 187.4 L166.8 186.9 L170.0 186.5 L172.8 186.1 L175.4 185.8 L177.8 185.5 L180.1 185.2 L182.2 184.9 L184.2 184.6 L186.2 184.4 L188.1 184.1 L190.0 183.8 L192.0 183.5 L193.8 183.2 L195.4 183.0 L196.8 182.9 L198.2 182.7 L199.6 182.5 L201.0 182.3 L202.7 182.0 L204.8 181.5 L207.2 181.0 L210.1 180.3 L213.6 179.4 L217.7 178.3 L222.2 177.0 L227.0 175.6 L232.1 174.1 L237.2 172.6 L242.2 171.2 L247.1 169.9 L251.8 168.7 L256.0 167.7 L259.9 166.9 L263.7 166.2 L267.4 165.6 L270.9 165.0 L274.3 164.6 L277.7 164.2 L280.9 163.8 L284.0 163.5 L287.0 163.1 L289.9 162.8 L292.7 162.5 L295.2 162.3 L297.6 162.1 L299.9 161.9 L302.1 161.7 L304.3 161.6 L306.5 161.5 L308.8 161.4 L311.1 161.3 L313.6 161.1 L316.2 160.9 L319.0 160.7 L321.8 160.5 L324.7 160.3 L327.6 160.1 L330.5 159.9 L333.4 159.7 L336.2 159.6 L338.9 159.5 L341.5 159.5 L343.9 159.5 L346.2 159.6 L348.4 159.7 L350.4 159.9 L352.5 160.0 L354.6 160.2 L356.8 160.4 L359.2 160.7 L361.7 160.9 L364.5 161.1 L367.6 161.3 L371.0 161.5 L374.5 161.8 L378.3 162.0 L382.1 162.2 L385.9 162.5 L389.7 162.8 L393.5 163.1 L397.0 163.5 L400.4 163.9 L403.5 164.3 L406.4 164.8 L409.2 165.2 L411.8 165.7 L414.5 166.2 L417.1 166.8 L419.9 167.4 L422.8 168.0 L425.8 168.7 L429.2 169.5 L432.9 170.4 L436.8 171.3 L441.0 172.3 L445.3 173.4 L449.7 174.5 L454.1 175.6 L458.4 176.7 L462.7 177.8 L466.7 178.9 L470.4 179.9 L473.6 180.8 L476.3 181.5 L478.6 182.2 L480.7 182.8 L482.8 183.5 L485.2 184.2 L488.0 185.1 L491.4 186.2 L495.6 187.5 L500.8 189.2 L507.3 191.3 L515.0 193.8 L523.7 196.5 L533.0 199.5 L542.6 202.7 L552.4 205.8 L561.9 208.9 L571.0 211.9 L579.2 214.6 L586.5 217.0 L592.7 219.1 L598.2 220.9 L603.1 222.5 L607.5 224.0 L611.7 225.4 L615.7 226.7 L619.7 228.1 L623.9 229.6 L628.5 231.3 L633.5 233.1 L638.9 235.1 L644.6 237.1 L650.4 239.2 L656.4 241.4 L662.4 243.7 L668.5 246.0 L674.7 248.4 L680.8 250.8 L686.8 253.3 L692.7 255.9 L698.6 258.6 L704.5 261.3 L710.4 264.2 L716.3 267.1 L722.2 270.0 L728.0 273.0 L733.7 276.1 L739.4 279.1 L745.0 282.2 L750.4 285.3 L755.8 288.4 L761.1 291.7 L766.4 295.0 L771.7 298.3 L776.8 301.6 L781.8 304.9 L786.7 308.2 L791.4 311.4 L795.8 314.4 L800.0 317.3 L803.2 319.7 L806.3 322.1 L809.5 324.5 L812.6 326.9 L815.8 329.4 L819.0 331.8 L822.1 334.2 L825.3 336.6 L828.4 339.0 L831.6 341.4 L837.7 346.7 L843.9 352.0 L850.0 357.3 L856.2 362.6 L862.3 367.9 L868.4 373.3 L874.6 378.6 L880.7 383.9 L886.9 389.2 L893.0 394.5 L896.6 398.6 L900.1 402.7 L903.7 406.8 L907.2 410.9 L910.8 414.9 L914.4 419.0 L917.9 423.1 L921.5 427.2 L925.0 431.3 L928.6 435.4 L932.8 439.1 L937.0 442.7 L941.2 446.4 L945.4 450.0 L949.5 453.7 L953.7 457.4 L957.9 461.0 L962.1 464.7 L966.3 468.3 L970.5 472.0 L972.9 473.6 L975.3 475.3 L977.8 476.9 L980.2 478.6 L982.6 480.2 L985.0 481.8 L987.4 483.5 L989.9 485.1 L992.3 486.8 L994.7 488.4 L997.1 490.0 L999.5 491.7 L1002.0 493.3 L1004.4 495.0 L1006.8 496.6 L1009.2 498.2 L1011.6 499.9 L1014.1 501.5 L1016.5 503.2 L1018.9 504.8 L1018.9 578.8 L1005.2 585.2 L992.2 591.8 L980.4 597.0 L968.5 587.1 L965.7 582.9 L962.9 578.8 L960.1 574.6 L957.3 570.5 L954.5 566.3 L951.7 562.1 L948.9 558.0 L946.1 553.8 L943.3 549.7 L940.5 545.5 L938.2 541.7 L935.8 537.9 L933.5 534.1 L931.2 530.3 L928.9 526.5 L926.5 522.8 L924.2 519.0 L921.9 515.2 L919.5 511.4 L917.2 507.6 L913.8 503.8 L910.3 500.1 L906.9 496.3 L903.4 492.6 L900.0 488.8 L896.6 485.0 L893.1 481.3 L889.7 477.5 L886.2 473.8 L882.8 470.0 L880.0 466.6 L877.2 463.3 L874.5 459.9 L871.7 456.6 L868.9 453.2 L866.1 449.8 L863.3 446.5 L860.6 443.1 L857.8 439.8 L855.0 436.4 L849.6 431.7 L844.2 427.1 L838.8 422.4 L833.4 417.7 L828.0 413.0 L822.6 408.4 L817.2 403.7 L811.8 399.0 L806.4 394.4 L801.0 389.7 L798.4 387.7 L795.8 385.7 L793.2 383.7 L790.6 381.7 L788.0 379.8 L785.5 377.8 L782.9 375.8 L780.3 373.8 L777.7 371.8 L775.1 369.8 L771.6 367.4 L767.8 364.9 L763.8 362.2 L759.6 359.5 L755.3 356.7 L750.9 353.9 L746.4 351.1 L741.8 348.4 L737.2 345.6 L732.6 343.0 L727.9 340.4 L723.2 337.8 L718.3 335.2 L713.4 332.7 L708.4 330.1 L703.4 327.6 L698.3 325.1 L693.2 322.6 L688.0 320.2 L682.8 317.9 L677.5 315.6 L672.1 313.3 L666.6 311.1 L661.0 308.9 L655.4 306.7 L649.8 304.6 L644.3 302.5 L638.9 300.5 L633.7 298.6 L628.6 296.7 L623.9 295.0 L619.7 293.5 L615.7 292.1 L611.9 290.7 L608.1 289.4 L604.1 288.1 L599.9 286.7 L595.2 285.1 L589.8 283.4 L583.8 281.4 L576.7 279.1 L568.5 276.4 L559.6 273.5 L550.1 270.5 L540.5 267.3 L530.9 264.3 L521.7 261.3 L513.2 258.6 L505.6 256.1 L499.2 254.1 L494.1 252.5 L490.1 251.2 L486.9 250.1 L484.3 249.3 L482.1 248.6 L480.2 248.0 L478.3 247.4 L476.3 246.8 L473.9 246.1 L470.9 245.3 L467.4 244.3 L463.7 243.3 L459.8 242.3 L455.8 241.3 L451.7 240.2 L447.7 239.2 L443.7 238.2 L440.0 237.3 L436.4 236.5 L433.2 235.7 L430.3 235.0 L427.7 234.5 L425.4 234.0 L423.2 233.5 L421.2 233.1 L419.1 232.7 L417.0 232.4 L414.8 232.0 L412.5 231.7 L409.9 231.3 L407.0 230.9 L403.9 230.6 L400.7 230.2 L397.3 229.9 L394.0 229.5 L390.6 229.2 L387.3 228.9 L384.1 228.7 L381.2 228.4 L378.5 228.2 L376.1 228.0 L373.9 227.8 L372.0 227.7 L370.1 227.5 L368.4 227.4 L366.6 227.3 L364.9 227.2 L363.1 227.1 L361.2 227.1 L359.2 227.1 L357.0 227.1 L354.7 227.2 L352.4 227.3 L350.0 227.4 L347.6 227.5 L345.2 227.6 L342.7 227.8 L340.3 227.9 L338.0 228.1 L335.7 228.2 L333.5 228.3 L331.4 228.4 L329.4 228.5 L327.3 228.6 L325.3 228.8 L323.3 228.9 L321.2 229.1 L319.0 229.3 L316.7 229.5 L314.2 229.8 L311.6 230.1 L309.0 230.5 L306.3 230.9 L303.5 231.3 L300.6 231.7 L297.7 232.2 L294.6 232.7 L291.5 233.4 L288.2 234.0 L284.8 234.8 L281.2 235.7 L277.4 236.6 L273.4 237.6 L269.3 238.7 L265.2 239.8 L261.0 241.0 L256.9 242.2 L252.8 243.4 L248.9 244.7 L245.2 245.9 L241.7 247.2 L238.2 248.5 L234.8 249.8 L231.5 251.1 L228.3 252.5 L225.1 253.9 L222.0 255.3 L219.0 256.7 L216.0 258.2 L213.0 259.7 L210.1 261.3 L207.1 263.0 L204.2 264.8 L201.3 266.6 L198.5 268.4 L195.8 270.2 L193.2 271.8 L190.8 273.4 L188.5 274.7 L186.4 275.8 L184.5 276.7 L182.7 277.3 L181.0 277.9 L179.5 278.2 L178.1 278.5 L176.8 278.7 L175.7 278.8 L174.7 278.9 L173.8 279.1 L173.1 279.2 L162.7 262.5 L152.5 247.9 L133.2 217.1Z" fill="#dedede"/>
<g fill="none" stroke="#000" stroke-width="0.85" stroke-opacity="0.78">
<path d="M151.4 176.1 L228.5 165.5 L228.5 165.5 L231.3 164.6 L234.9 163.4 L239.2 162.0 L244.1 160.5 L249.2 158.8 L254.6 157.1 L259.9 155.4 L265.1 153.9 L270.0 152.6 L274.3 151.5 L278.3 150.7 L282.1 150.0 L285.9 149.4 L289.5 148.9 L293.1 148.5 L296.5 148.2 L299.8 147.9 L303.0 147.6 L306.1 147.3 L309.0 147.0 L311.8 146.7 L314.3 146.4 L316.6 146.2 L318.8 145.9 L320.9 145.7 L323.0 145.6 L325.1 145.4 L327.3 145.2 L329.6 145.1 L332.0 144.9 L334.6 144.7 L337.3 144.6 L340.1 144.4 L343.0 144.3 L345.9 144.2 L348.8 144.0 L351.7 143.9 L354.4 143.9 L357.1 143.8 L359.7 143.8 L362.1 143.8 L364.3 143.8 L366.3 143.9 L368.3 143.9 L370.2 144.0 L372.2 144.1 L374.3 144.3 L376.6 144.4 L379.1 144.6 L381.8 144.9 L384.9 145.2 L388.2 145.6 L391.8 146.0 L395.5 146.4 L399.3 146.9 L403.2 147.3 L407.0 147.8 L410.8 148.3 L414.3 148.8 L417.7 149.3 L420.8 149.8 L423.7 150.2 L426.4 150.6 L429.1 151.0 L431.7 151.5 L434.4 151.9 L437.1 152.5 L440.0 153.0 L443.1 153.7 L446.5 154.4 L450.2 155.2 L454.2 156.2 L458.5 157.2 L462.9 158.3 L467.4 159.4 L471.9 160.5 L476.4 161.6 L480.7 162.7 L484.8 163.8 L488.6 164.8 L491.9 165.7 L494.7 166.4 L497.0 167.0 L499.2 167.6 L501.4 168.2 L503.9 168.9 L506.7 169.7 L510.1 170.7 L514.4 172.1 L519.6 173.7 L526.1 175.8 L533.7 178.2 L542.2 181.0 L551.4 184.0 L560.9 187.1 L570.5 190.2 L579.9 193.3 L588.9 196.3 L597.0 199.0 L604.2 201.4 L610.3 203.5 L615.7 205.4 L620.5 207.1 L624.9 208.6 L629.0 210.1 L632.9 211.6 L636.9 213.1 L641.1 214.6 L645.7 216.3 L650.7 218.1 L656.2 220.0 L661.9 222.0 L667.8 224.0 L673.9 226.1 L680.1 228.2 L686.3 230.4 L692.6 232.7 L698.8 235.0 L704.9 237.4 L710.9 239.9 L716.8 242.5 L722.7 245.2 L728.6 247.9 L734.5 250.7 L740.3 253.6 L746.1 256.6 L751.8 259.6 L757.5 262.6 L763.1 265.6 L768.5 268.7 L773.9 271.8 L779.3 275.1 L784.7 278.4 L790.0 281.8 L795.2 285.2 L800.3 288.5 L805.2 291.9 L810.0 295.1 L814.5 298.2 L818.7 301.1 L821.9 303.5 L825.0 306.0 L828.2 308.4 L831.3 310.9 L834.5 313.3 L837.6 315.7 L840.8 318.2 L843.9 320.6 L847.1 323.1 L850.2 325.5 L856.3 330.9 L862.4 336.3 L868.6 341.6 L874.7 347.0 L880.8 352.4 L886.9 357.8 L893.0 363.2 L899.2 368.5 L905.3 373.9 L911.4 379.3 L914.9 383.4 L918.4 387.4 L921.9 391.5 L925.4 395.5 L928.9 399.6 L932.4 403.7 L935.9 407.7 L939.4 411.8 L942.9 415.8 L946.4 419.9 L950.6 423.5 L954.7 427.2 L958.9 430.8 L963.0 434.5 L967.2 438.1 L971.4 441.8 L975.5 445.4 L979.7 449.1 L983.8 452.8 L988.0 456.4 L990.4 458.1 L992.9 459.7 L995.3 461.4 L997.7 463.0 L1000.1 464.7 L1002.6 466.4 L1005.0 468.0 L1007.4 469.7 L1009.9 471.3 L1012.3 473.0 L1014.7 474.7 L1017.2 476.3 L1019.6 478.0 L1022.0 479.7 L1024.4 481.4 L1026.9 483.0 L1029.3 484.7 L1031.7 486.4 L1034.2 488.0 L1036.6 489.7"/>
<path d="M151.4 176.1 L133.2 191.4"/>
<path d="M228.5 165.5 L191.7 195.1"/>
<path d="M274.3 151.5 L191.9 224.4"/>
<path d="M309.0 147.0 L223.0 218.1"/>
<path d="M332.0 144.9 L249.2 217.8"/>
<path d="M359.7 143.8 L277.8 214.4"/>
<path d="M381.8 144.9 L303.9 217.8"/>
<path d="M417.7 149.3 L339.8 215.0"/>
<path d="M446.5 154.4 L385.9 207.2"/>
<path d="M488.6 164.8 L424.9 217.6"/>
<path d="M519.6 173.7 L453.8 227.9"/>
<path d="M604.2 201.4 L558.2 242.0"/>
<path d="M650.7 218.1 L606.0 257.1"/>
<path d="M710.9 239.9 L663.6 281.5"/>
<path d="M768.5 268.7 L721.4 311.9"/>
<path d="M818.7 301.1 L770.1 343.2"/>
<path d="M850.2 325.5 L801.8 366.8"/>
<path d="M911.4 379.3 L870.9 412.7"/>
<path d="M946.4 419.9 L907.2 454.0"/>
<path d="M988.0 456.4 L949.5 490.7"/>
<path d="M1036.6 489.7 L1018.9 504.8"/>
<path d="M254.6 164.0 L208.5 223.2"/>
<path d="M270.0 194.8 L251.0 212.5"/>
<path d="M152.1 246.6 L152.8 246.1 L153.7 245.4 L154.8 244.7 L156.0 243.8 L157.3 242.9 L158.7 241.9 L160.3 240.8 L162.0 239.6 L163.7 238.4 L165.6 237.1 L167.6 235.8 L169.7 234.4 L171.9 232.9 L174.3 231.4 L176.8 229.8 L179.3 228.1 L181.9 226.4 L184.6 224.6 L187.3 222.7 L190.0 220.8 L192.7 218.7 L195.3 216.5 L198.0 214.1 L200.7 211.7 L203.5 209.2 L206.4 206.8 L209.4 204.4 L212.6 202.1 L215.9 200.0 L219.5 198.2 L223.3 196.5 L227.5 194.9 L232.0 193.5 L236.6 192.2 L241.3 191.0 L246.0 189.8 L250.7 188.8 L255.2 187.8 L259.5 186.9 L263.5 186.0 L267.3 185.2 L270.9 184.5 L274.5 183.9 L277.9 183.3 L281.2 182.8 L284.4 182.4 L287.6 182.0 L290.6 181.6 L293.5 181.3 L296.3 181.0 L299.0 180.7 L301.5 180.4 L303.9 180.2 L306.1 180.0 L308.3 179.9 L310.4 179.7 L312.6 179.6 L314.8 179.5 L317.1 179.3 L319.5 179.2 L322.1 179.0 L324.7 178.9 L327.5 178.7 L330.3 178.5 L333.1 178.4 L336.0 178.2 L338.7 178.1 L341.5 178.0 L344.1 177.9 L346.6 177.9 L348.9 177.9 L351.0 178.0 L353.0 178.1 L355.0 178.2 L356.9 178.3 L358.8 178.5 L360.8 178.6 L363.0 178.8 L365.4 179.0 L368.1 179.2 L371.1 179.4 L374.3 179.6 L377.8 179.9 L381.4 180.1 L385.1 180.4 L388.9 180.7 L392.6 181.0 L396.2 181.3 L399.6 181.7 L402.9 182.1 L405.9 182.5 L408.6 182.9 L411.2 183.4 L413.8 183.9 L416.2 184.4 L418.8 184.9 L421.4 185.5 L424.1 186.2 L427.1 186.9 L430.3 187.6 L433.9 188.4 L437.7 189.3 L441.8 190.3 L446.1 191.3 L450.4 192.3 L454.7 193.4 L459.0 194.5 L463.1 195.5 L467.0 196.5 L470.7 197.5 L473.9 198.4 L476.4 199.1 L478.6 199.7 L480.7 200.3 L482.7 200.9 L485.0 201.6 L487.7 202.4 L491.0 203.5 L495.2 204.8 L500.4 206.5 L506.8 208.6 L514.5 211.0 L523.1 213.8 L532.4 216.8 L542.0 219.9 L551.8 223.1 L561.3 226.2 L570.3 229.2 L578.6 231.9 L585.8 234.3 L592.0 236.4 L597.4 238.2 L602.3 239.8 L606.6 241.3 L610.8 242.7 L614.7 244.1 L618.7 245.5 L622.9 247.0 L627.3 248.7 L632.3 250.5 L637.6 252.4 L643.2 254.4 L648.9 256.4 L654.8 258.6 L660.7 260.7 L666.7 263.0 L672.7 265.3 L678.7 267.6 L684.5 270.0 L690.3 272.5 L696.0 275.1 L701.7 277.7 L707.4 280.5 L713.1 283.2 L718.7 286.1 L724.3 289.0 L729.8 291.9 L735.2 294.8 L740.6 297.8 L745.8 300.7 L751.0 303.7 L756.1 306.8 L761.2 310.0 L766.3 313.2 L771.2 316.4 L776.1 319.5 L780.7 322.7 L785.2 325.7 L789.5 328.6 L793.5 331.4 L796.5 333.7 L799.5 336.0 L802.5 338.3 L805.5 340.6 L808.5 342.9 L811.6 345.2 L814.6 347.5 L817.6 349.9 L820.6 352.2 L823.6 354.5 L829.5 359.6 L835.4 364.8 L841.3 370.0 L847.2 375.2 L853.1 380.3 L859.0 385.5 L864.9 390.7 L870.8 395.8 L876.7 401.0 L882.6 406.2 L885.9 409.9 L889.1 413.6 L892.4 417.4 L895.7 421.1 L899.0 424.8 L902.2 428.6 L905.5 432.3 L908.8 436.0 L912.1 439.8 L915.3 443.5 L919.2 447.5 L923.0 451.4 L926.9 455.4 L930.8 459.4 L934.6 463.3 L938.5 467.3 L942.3 471.3 L946.2 475.2 L950.0 479.2 L953.9 483.2 L957.0 488.0 L960.1 492.8 L963.3 497.7 L966.4 502.5 L969.5 507.4 L972.6 512.2 L975.7 517.1 L978.9 521.9 L982.0 526.7 L985.1 531.6 L988.2 536.4 L991.4 541.3 L994.5 546.1 L997.6 550.9 L1000.7 555.8 L1003.9 560.6 L1007.0 565.5 L1010.1 570.3 L1013.2 575.1 L1016.4 580.0"/>
<path d="M165.5 238.0 L167.4 236.8 L169.5 235.4 L171.7 233.9 L174.1 232.4 L176.5 230.8 L179.0 229.2 L181.6 227.6 L184.3 225.9 L187.1 224.1 L189.9 222.4 L192.8 220.6 L195.7 218.7 L198.6 216.7 L201.7 214.7 L204.8 212.6 L208.1 210.6 L211.4 208.7 L214.9 206.8 L218.5 205.0 L222.2 203.3 L226.1 201.8 L230.3 200.4 L234.8 199.0 L239.3 197.7 L243.9 196.4 L248.5 195.3 L253.1 194.2 L257.5 193.1 L261.7 192.2 L265.7 191.3 L269.4 190.5 L273.0 189.8 L276.5 189.2 L279.9 188.6 L283.2 188.1 L286.4 187.7 L289.5 187.3 L292.5 186.9 L295.4 186.6 L298.2 186.2 L300.9 185.9 L303.4 185.7 L305.7 185.4 L307.9 185.3 L310.1 185.1 L312.2 185.0 L314.3 184.8 L316.5 184.7 L318.8 184.6 L321.2 184.5 L323.8 184.3 L326.4 184.1 L329.2 184.0 L331.9 183.8 L334.7 183.7 L337.5 183.5 L340.3 183.4 L343.0 183.3 L345.6 183.3 L348.1 183.3 L350.3 183.3 L352.4 183.3 L354.4 183.4 L356.3 183.5 L358.1 183.6 L360.0 183.7 L362.0 183.9 L364.2 184.1 L366.5 184.3 L369.1 184.5 L372.1 184.7 L375.3 184.9 L378.7 185.1 L382.3 185.4 L386.0 185.6 L389.7 185.9 L393.4 186.2 L397.0 186.6 L400.4 186.9 L403.6 187.3 L406.5 187.8 L409.3 188.2 L411.8 188.7 L414.3 189.2 L416.8 189.7 L419.2 190.2 L421.8 190.8 L424.5 191.4 L427.4 192.1 L430.6 192.9 L434.2 193.7 L438.0 194.6 L442.1 195.5 L446.3 196.5 L450.6 197.5 L454.9 198.6 L459.1 199.6 L463.2 200.7 L467.2 201.7 L470.8 202.6 L473.9 203.5 L476.5 204.2 L478.7 204.8 L480.7 205.3 L482.7 205.9 L485.0 206.6 L487.6 207.5 L490.9 208.5 L495.1 209.9 L500.2 211.5 L506.7 213.6 L514.4 216.1 L523.0 218.8 L532.2 221.8 L541.9 225.0 L551.6 228.1 L561.1 231.2 L570.2 234.2 L578.4 236.9 L585.6 239.3 L591.8 241.4 L597.2 243.2 L602.0 244.8 L606.4 246.4 L610.5 247.8 L614.4 249.2 L618.4 250.6 L622.5 252.1 L627.0 253.7 L631.9 255.5 L637.2 257.4 L642.8 259.4 L648.5 261.4 L654.3 263.5 L660.2 265.7 L666.2 267.9 L672.1 270.2 L678.0 272.5 L683.9 274.9 L689.6 277.3 L695.2 279.9 L700.9 282.5 L706.5 285.2 L712.1 287.9 L717.7 290.8 L723.2 293.6 L728.7 296.5 L734.0 299.4 L739.3 302.3 L744.5 305.2"/>
<path d="M165.5 238.4 L167.4 237.1 L169.5 235.7 L171.7 234.3 L174.0 232.8 L176.4 231.2 L178.9 229.6 L181.5 228.0 L184.2 226.3 L187.0 224.6 L189.9 222.9 L192.8 221.2 L195.8 219.4 L198.9 217.6 L202.0 215.7 L205.3 213.8 L208.6 211.9 L212.1 210.1 L215.7 208.3 L219.3 206.6 L223.1 205.1 L227.1 203.6 L231.3 202.2 L235.7 200.8 L240.2 199.5 L244.8 198.3 L249.4 197.1 L253.9 196.0 L258.3 194.9 L262.5 194.0 L266.4 193.1 L270.1 192.3 L273.7 191.6 L277.2 190.9 L280.6 190.4 L283.9 189.9 L287.1 189.5 L290.2 189.1 L293.1 188.7 L296.0 188.3 L298.8 188.0 L301.5 187.7 L304.0 187.4 L306.3 187.2 L308.5 187.0 L310.7 186.9 L312.8 186.7 L314.9 186.6 L317.1 186.5 L319.4 186.4 L321.8 186.2 L324.3 186.1 L327.0 185.9 L329.7 185.7 L332.5 185.6 L335.3 185.4 L338.1 185.3 L340.8 185.2 L343.5 185.1 L346.1 185.1 L348.6 185.0 L350.8 185.1 L352.9 185.1 L354.8 185.2 L356.7 185.3 L358.5 185.4 L360.4 185.5 L362.4 185.7 L364.5 185.8 L366.9 186.0 L369.5 186.2 L372.4 186.4 L375.6 186.6 L379.0 186.9 L382.6 187.1 L386.3 187.4 L390.0 187.7 L393.7 188.0 L397.2 188.3 L400.6 188.7 L403.8 189.1 L406.8 189.5 L409.5 190.0 L412.0 190.4 L414.5 190.9 L416.9 191.4 L419.4 192.0 L421.9 192.6 L424.6 193.2 L427.6 193.9 L430.7 194.6 L434.3 195.4 L438.1 196.3 L442.1 197.2 L446.3 198.2 L450.6 199.3 L454.9 200.3 L459.2 201.3 L463.3 202.4 L467.2 203.4 L470.8 204.3 L473.9 205.2 L476.5 205.8 L478.7 206.5 L480.7 207.0 L482.7 207.6 L484.9 208.3 L487.6 209.2 L490.9 210.2 L495.0 211.5 L500.2 213.2 L506.6 215.3 L514.3 217.7 L522.9 220.5 L532.2 223.5 L541.8 226.6 L551.5 229.8 L561.1 232.9 L570.1 235.9 L578.4 238.6 L585.6 241.0 L591.7 243.1 L597.1 244.9 L601.9 246.5 L606.3 248.0 L610.4 249.5 L614.4 250.9 L618.3 252.3 L622.4 253.8 L626.9 255.4 L631.8 257.2 L637.1 259.1 L642.6 261.1 L648.3 263.1 L654.1 265.2 L660.0 267.3 L666.0 269.5 L671.9 271.8 L677.8 274.1 L683.7 276.5 L689.3 278.9 L695.0 281.5 L700.6 284.1 L706.2 286.8 L711.8 289.5 L717.4 292.3 L722.9 295.2 L728.3 298.0 L733.6 300.9 L738.9 303.8 L744.0 306.7 L749.1 309.7 L754.2 312.7 L759.2 315.8 L764.2 318.9 L769.1 322.1 L773.8 325.2 L778.4 328.3 L782.8 331.2 L787.0 334.1 L791.0 336.8 L793.9 339.1 L796.9 341.4 L799.8 343.6 L802.8 345.9 L805.7 348.2 L808.7 350.5 L811.6 352.7 L814.6 355.0 L817.6 357.3 L820.5 359.5 L826.3 364.7 L832.1 369.8 L837.9 374.9 L843.7 380.0 L849.5 385.1 L855.3 390.2 L861.1 395.3 L866.9 400.4 L872.7 405.6 L878.6 410.7 L881.7 414.3 L884.9 417.9 L888.0 421.5 L891.2 425.1 L894.4 428.7 L897.5 432.3 L900.7 435.9 L903.9 439.5 L907.0 443.1 L910.2 446.7 L913.9 450.7 L917.6 454.8 L921.4 458.9 L925.1 463.0 L928.8 467.1 L932.5 471.2 L936.3 475.2 L940.0 479.3 L943.7 483.4 L947.5 487.5 L950.5 492.3 L953.6 497.1 L956.7 501.9 L959.8 506.6 L962.9 511.4 L966.0 516.2 L969.1 521.0 L972.2 525.8 L975.3 530.6 L978.4 535.4 L981.5 540.2 L984.5 545.0 L987.6 549.8 L990.7 554.6 L993.8 559.3 L996.9 564.1 L1000.0 568.9 L1003.1 573.7 L1006.2 578.5 L1009.3 583.3"/>
<path d="M152.5 247.9 L153.2 247.4 L154.1 246.8 L155.1 246.1 L156.2 245.3 L157.4 244.4 L158.8 243.5 L160.3 242.5 L161.9 241.4 L163.6 240.3 L165.4 239.1 L167.3 237.9 L169.4 236.5 L171.5 235.1 L173.8 233.6 L176.2 232.0 L178.7 230.5 L181.3 228.9 L184.0 227.3 L186.9 225.7 L189.8 224.2 L192.9 222.7 L196.1 221.1 L199.4 219.6 L202.8 218.0 L206.3 216.5 L210.0 214.9 L213.7 213.4 L217.5 211.9 L221.3 210.5 L225.2 209.1 L229.2 207.7 L233.5 206.4 L237.9 205.1 L242.3 203.8 L246.8 202.5 L251.4 201.3 L255.8 200.2 L260.1 199.1 L264.2 198.1 L268.1 197.2 L271.8 196.4 L275.4 195.7 L278.8 195.1 L282.2 194.5 L285.5 194.0 L288.6 193.6 L291.7 193.2 L294.6 192.8 L297.5 192.4 L300.3 192.1 L302.9 191.8 L305.4 191.5 L307.7 191.3 L309.9 191.1 L312.1 190.9 L314.2 190.8 L316.3 190.7 L318.4 190.6 L320.7 190.4 L323.1 190.3 L325.6 190.2 L328.3 190.0 L331.0 189.8 L333.8 189.7 L336.5 189.6 L339.3 189.4 L342.0 189.3 L344.7 189.3 L347.3 189.2 L349.7 189.2 L351.9 189.2 L354.0 189.3 L355.9 189.3 L357.7 189.4 L359.5 189.5 L361.4 189.6 L363.3 189.8 L365.4 189.9 L367.7 190.1 L370.3 190.3 L373.2 190.5 L376.4 190.7 L379.8 191.0 L383.3 191.2 L387.0 191.5 L390.7 191.8 L394.3 192.1 L397.8 192.4 L401.2 192.8 L404.4 193.2 L407.3 193.6 L410.0 194.1 L412.5 194.5 L414.9 195.0 L417.3 195.5 L419.8 196.1 L422.3 196.7 L424.9 197.3 L427.8 198.0 L431.0 198.7 L434.5 199.5 L438.3 200.4 L442.3 201.3 L446.5 202.3 L450.8 203.3 L455.1 204.3 L459.3 205.3 L463.4 206.4 L467.3 207.4 L470.9 208.3 L474.0 209.1 L476.5 209.8 L478.7 210.4 L480.7 211.0 L482.7 211.6 L484.9 212.3 L487.6 213.1 L490.8 214.1 L495.0 215.5 L500.1 217.1 L506.5 219.2 L514.2 221.6 L522.8 224.4 L532.1 227.4 L541.7 230.5 L551.4 233.7 L560.9 236.8 L570.0 239.8 L578.2 242.5 L585.4 244.9 L591.5 247.0 L596.9 248.8 L601.8 250.4 L606.1 252.0 L610.2 253.4 L614.1 254.8 L618.1 256.2 L622.2 257.7 L626.6 259.3 L631.5 261.1 L636.8 263.0 L642.3 265.0 L648.0 267.0 L653.8 269.1 L659.6 271.2 L665.6 273.4 L671.5 275.6 L677.4 277.9 L683.1 280.3 L688.8 282.7 L694.4 285.2 L700.0 287.8 L705.5 290.4 L711.1 293.2 L716.6 295.9 L722.0 298.8 L727.4 301.6 L732.7 304.5 L737.9 307.3 L743.0 310.2 L748.0 313.1 L753.1 316.1 L758.1 319.2 L763.0 322.3 L767.8 325.4 L772.5 328.5 L777.1 331.5 L781.4 334.5 L785.6 337.3 L789.5 340.0 L792.4 342.2 L795.3 344.5 L798.3 346.8 L801.2 349.0 L804.1 351.2 L807.0 353.5 L809.9 355.8 L812.9 358.0 L815.8 360.2 L818.7 362.5 L824.5 367.6 L830.2 372.7 L836.0 377.7 L841.7 382.8 L847.5 387.9 L853.2 393.0 L859.0 398.1 L864.7 403.1 L870.5 408.2 L876.2 413.3 L879.3 416.8 L882.4 420.3 L885.5 423.9 L888.6 427.4 L891.7 430.9 L894.8 434.4 L897.9 437.9 L901.0 441.5 L904.1 445.0 L907.2 448.5 L910.9 452.6 L914.5 456.8 L918.2 460.9 L921.8 465.1 L925.5 469.2 L929.1 473.4 L932.8 477.6 L936.4 481.7 L940.1 485.9 L943.7 490.0 L946.8 494.8 L949.8 499.5 L952.9 504.3 L956.0 509.0 L959.1 513.8 L962.1 518.6 L965.2 523.3 L968.3 528.1 L971.3 532.9 L974.4 537.6 L977.5 542.4 L980.6 547.1 L983.6 551.9 L986.7 556.7 L989.8 561.4 L992.9 566.2 L995.9 570.9 L999.0 575.7 L1002.1 580.5 L1005.1 585.2"/>
<path d="M532.8 205.1 L542.4 208.2 L552.2 211.4 L561.7 214.5 L570.8 217.5 L579.0 220.2 L586.3 222.6 L592.5 224.6 L597.9 226.4 L602.8 228.1 L607.2 229.6 L611.4 231.0 L615.4 232.3 L619.4 233.8 L623.6 235.3 L628.1 236.9 L633.1 238.7 L638.5 240.7 L644.1 242.7 L649.9 244.8 L655.9 247.0 L661.9 249.2 L667.9 251.5 L674.0 253.8 L680.1 256.2 L686.1 258.7"/>
<path d="M500.6 198.1 L507.1 200.2 L514.8 202.7 L523.4 205.5 L532.7 208.5 L542.3 211.6 L552.1 214.8 L561.6 217.9 L570.6 220.8 L578.9 223.5 L586.1 225.9 L592.3 228.0 L597.8 229.8 L602.6 231.4 L607.1 232.9 L611.2 234.3 L615.2 235.7 L619.2 237.1 L623.4 238.6 L627.9 240.2 L632.9 242.1 L638.2 244.0 L643.9 246.0 L649.6 248.1 L655.5 250.3 L661.5 252.5 L667.6 254.7 L673.6 257.1 L679.7 259.5 L685.6 261.9 L691.5 264.5 L697.2 267.1 L703.0 269.8 L708.8 272.6 L714.6 275.4 L720.4 278.3 L726.1 281.3 L731.7 284.2 L737.3 287.2 L742.7 290.3 L748.0 293.3"/>
<path d="M152.9 248.5 L153.6 248.0 L154.5 247.4 L155.5 246.7 L156.6 246.0 L157.8 245.1 L159.2 244.2 L160.7 243.2 L162.3 242.2 L164.1 241.1 L165.9 240.0 L167.9 238.8 L170.0 237.5 L172.2 236.1 L174.5 234.6 L176.9 233.1 L179.5 231.6 L182.1 230.1 L184.9 228.7 L187.9 227.3 L190.9 226.0 L194.1 224.8 L197.5 223.6 L201.1 222.5 L204.8 221.5 L208.6 220.5 L212.4 219.5 L216.4 218.4 L220.4 217.4 L224.4 216.4 L228.4 215.3 L232.5 214.1 L236.7 212.9 L241.1 211.6 L245.6 210.3 L250.0 209.0 L254.4 207.7 L258.8 206.5 L263.0 205.4 L267.1 204.3 L270.9 203.4 L274.6 202.6 L278.1 201.9 L281.5 201.3 L284.8 200.8 L288.0 200.3 L291.1 199.9 L294.1 199.5 L297.1 199.1 L299.9 198.7 L302.7 198.4 L305.3 198.1 L307.7 197.8 L310.0 197.6 L312.2 197.4 L314.4 197.3 L316.5 197.1 L318.6 197.0 L320.8 196.9 L323.0 196.7 L325.4 196.6 L327.9 196.5 L330.5 196.3 L333.1 196.2 L335.8 196.0 L338.5 195.9 L341.2 195.8 L343.9 195.7 L346.5 195.6 L349.0 195.6 L351.4 195.6 L353.6 195.6 L355.6 195.6 L357.5 195.7 L359.3 195.8 L361.1 195.9 L362.9 196.0 L364.8 196.1 L366.9 196.3 L369.2 196.5 L371.7 196.7 L374.6 196.9 L377.7 197.1 L381.1 197.4 L384.5 197.7 L388.1 198.0 L391.7 198.3 L395.3 198.6 L398.8 199.0 L402.1 199.4 L405.2 199.8 L408.1 200.2 L410.7 200.6 L413.2 201.0 L415.6 201.5 L418.0 202.0 L420.3 202.5 L422.8 203.0 L425.4 203.6 L428.3 204.3 L431.4 205.0 L434.9 205.8 L438.6 206.7 L442.6 207.6 L446.8 208.6 L451.0 209.6 L455.2 210.6 L459.4 211.7 L463.5 212.7 L467.3 213.7 L470.9 214.6 L474.0 215.5 L476.5 216.1 L478.6 216.7 L480.6 217.3 L482.6 217.9 L484.8 218.5 L487.4 219.4 L490.7 220.4 L494.8 221.7 L499.9 223.3 L506.4 225.4 L514.0 227.9 L522.6 230.6 L531.9 233.6 L541.5 236.8 L551.2 239.9 L560.7 243.1 L569.7 246.0 L578.0 248.7 L585.1 251.1 L591.3 253.2 L596.7 255.0 L601.5 256.6 L605.8 258.1 L609.9 259.5 L613.8 260.8 L617.8 262.2 L621.8 263.7 L626.2 265.3 L631.1 267.1 L636.3 269.0 L641.7 270.9 L647.3 273.0 L653.0 275.1 L658.8 277.2 L664.7 279.4 L670.5 281.7 L676.2 284.0 L681.9 286.3 L687.5 288.7 L693.0 291.2 L698.5 293.8 L704.0 296.4 L709.4 299.0 L714.8 301.7 L720.2 304.5 L725.5 307.2 L730.7 310.0 L735.9 312.8 L740.9 315.7"/>
<path d="M162.2 261.8 L162.9 261.4 L163.6 260.9 L164.5 260.4 L165.6 259.8 L166.7 259.1 L168.0 258.4 L169.3 257.5 L170.9 256.6 L172.5 255.6 L174.3 254.4 L176.2 253.2 L178.2 251.8 L180.5 250.3 L182.8 248.7 L185.3 247.0 L187.8 245.3 L190.5 243.6 L193.2 241.8 L196.0 240.0 L198.8 238.3 L201.7 236.5 L204.6 234.7 L207.6 232.8 L210.6 230.9 L213.8 228.9 L217.0 227.0 L220.3 225.2 L223.7 223.4 L227.3 221.7 L230.9 220.1 L234.8 218.6 L238.9 217.2 L243.2 215.9 L247.6 214.6 L252.1 213.4 L256.5 212.3 L260.9 211.2 L265.2 210.2 L269.3 209.2 L273.1 208.4 L276.7 207.6 L280.2 206.9 L283.6 206.3 L286.9 205.7 L290.0 205.2 L293.1 204.8 L296.1 204.4 L299.0 204.1 L301.8 203.7 L304.5 203.4 L307.1 203.1 L309.6 202.8 L311.9 202.6 L314.1 202.4 L316.2 202.2 L318.3 202.1 L320.4 202.0 L322.6 201.8 L324.8 201.7 L327.2 201.6 L329.6 201.4 L332.2 201.3 L334.8 201.2 L337.4 201.0 L340.1 200.9 L342.7 200.8 L345.3 200.7 L347.9 200.7 L350.3 200.6 L352.7 200.6 L354.9 200.6 L356.9 200.7 L358.7 200.7 L360.5 200.8 L362.3 200.9 L364.1 201.0 L366.1 201.2 L368.1 201.3 L370.4 201.5 L372.9 201.7 L375.7 202.0 L378.8 202.2 L382.1 202.5 L385.5 202.8 L389.0 203.1 L392.6 203.4 L396.1 203.8 L399.5 204.2 L402.8 204.6 L405.9 205.0 L408.7 205.4 L411.3 205.8 L413.8 206.2 L416.1 206.6 L418.4 207.1 L420.8 207.6 L423.2 208.1 L425.8 208.7 L428.7 209.3 L431.7 210.0 L435.2 210.8 L438.9 211.6 L442.8 212.6 L446.9 213.6 L451.1 214.6 L455.3 215.6 L459.5 216.7 L463.5 217.7 L467.3 218.7 L470.9 219.7 L474.0 220.5 L476.4 221.1 L478.6 221.7 L480.5 222.2 L482.5 222.8 L484.7 223.5 L487.3 224.3 L490.6 225.3 L494.7 226.6 L499.8 228.3 L506.2 230.3 L513.9 232.8 L522.5 235.6 L531.7 238.6 L541.3 241.7 L551.0 244.9 L560.5 248.0 L569.5 251.0 L577.8 253.7 L584.9 256.1 L591.1 258.1 L596.4 259.9 L601.2 261.5 L605.6 262.9 L609.7 264.3 L613.6 265.6 L617.5 267.0 L621.6 268.4 L625.9 270.0 L630.8 271.8 L635.9 273.7 L641.3 275.7 L646.8 277.7 L652.5 279.8 L658.2 282.0 L663.9 284.2 L669.7 286.5 L675.4 288.8 L681.0 291.1 L686.5 293.5 L691.9 296.0 L697.3 298.5 L702.8 301.0 L708.1 303.6 L713.5 306.3 L718.8 309.0 L724.0 311.7 L729.2 314.4 L734.3 317.2 L739.3 320.0 L744.2 322.8 L749.2 325.8 L754.1 328.8 L759.0 331.9 L763.8 335.0 L768.5 338.0 L773.0 341.0 L777.3 343.9 L781.4 346.7 L785.2 349.3 L788.0 351.5 L790.8 353.6 L793.6 355.8 L796.4 357.9 L799.2 360.1 L802.0 362.2 L804.8 364.4 L807.5 366.5 L810.3 368.6 L813.1 370.8 L818.8 375.8 L824.5 380.7 L830.1 385.7 L835.8 390.6 L841.5 395.6 L847.1 400.5 L852.8 405.5 L858.5 410.5 L864.1 415.4 L869.8 420.4 L872.8 423.8 L875.9 427.3 L878.9 430.7 L881.9 434.2 L884.9 437.6 L888.0 441.1 L891.0 444.5 L894.0 448.0 L897.0 451.4 L900.1 454.9 L903.6 459.0 L907.2 463.0 L910.8 467.1 L914.3 471.1 L917.9 475.2 L921.5 479.3 L925.0 483.3 L928.6 487.4 L932.2 491.4 L935.7 495.5 L938.8 500.2 L941.8 504.9 L944.9 509.6 L947.9 514.3 L950.9 519.0 L954.0 523.7 L957.0 528.5 L960.0 533.2 L963.1 537.9 L966.1 542.6 L969.1 547.3 L972.2 552.0 L975.2 556.7 L978.3 561.4 L981.3 566.1 L984.3 570.8 L987.4 575.5 L990.4 580.2 L993.4 584.9 L996.5 589.6"/>
<path d="M174.5 254.8 L176.4 253.6 L178.5 252.2 L180.7 250.7 L183.1 249.1 L185.6 247.5 L188.1 245.8 L190.8 244.1 L193.6 242.3 L196.4 240.6 L199.3 239.0 L202.2 237.4 L205.2 235.7 L208.3 234.0 L211.4 232.3 L214.7 230.6 L218.0 228.9 L221.4 227.3 L224.9 225.7 L228.6 224.2 L232.3 222.7 L236.1 221.3 L240.3 220.0 L244.6 218.6 L248.9 217.4 L253.4 216.1 L257.8 215.0 L262.2 213.9 L266.5 212.8 L270.5 211.9 L274.3 211.0 L277.9 210.2 L281.4 209.5 L284.7 208.9 L288.0 208.4 L291.1 207.9 L294.2 207.5 L297.1 207.1 L300.0 206.7 L302.8 206.4 L305.5 206.0 L308.1 205.7 L310.5 205.5 L312.8 205.2 L315.1 205.1 L317.2 204.9 L319.3 204.8 L321.4 204.6 L323.6 204.5 L325.8 204.4 L328.1 204.2 L330.6 204.1 L333.1 204.0 L335.7 203.8 L338.3 203.7 L340.9 203.6 L343.5 203.5 L346.1 203.4 L348.6 203.4 L351.1 203.3 L353.4 203.3 L355.6 203.3 L357.5 203.4 L359.4 203.4 L361.2 203.5 L363.0 203.6 L364.8 203.7 L366.7 203.9 L368.7 204.0 L371.0 204.2 L373.5 204.4 L376.3 204.6 L379.3 204.9 L382.6 205.2 L386.0 205.5 L389.5 205.8 L393.0 206.2 L396.5 206.5 L399.9 206.9 L403.2 207.3 L406.2 207.7 L409.0 208.1 L411.6 208.5 L414.1 208.9 L416.4 209.4 L418.7 209.8 L421.0 210.3 L423.5 210.8 L426.1 211.3 L428.8 212.0 L431.9 212.6 L435.3 213.4 L439.0 214.3 L443.0 215.2 L447.0 216.2 L451.2 217.3 L455.4 218.3 L459.5 219.4 L463.5 220.4 L467.4 221.4 L470.9 222.3 L473.9 223.1 L476.4 223.8 L478.5 224.4 L480.5 224.9 L482.5 225.5 L484.7 226.1 L487.3 226.9 L490.6 228.0 L494.6 229.2 L499.8 230.9 L506.2 232.9 L513.8 235.4 L522.4 238.2 L531.6 241.2 L541.2 244.3 L550.9 247.5 L560.4 250.6 L569.4 253.6 L577.6 256.3 L584.8 258.7 L590.9 260.7 L596.3 262.5 L601.1 264.1 L605.5 265.5 L609.5 266.9 L613.5 268.2 L617.4 269.5 L621.4 271.0 L625.8 272.5 L630.6 274.3 L635.7 276.2 L641.1 278.2 L646.6 280.2 L652.2 282.3 L657.8 284.5 L663.5 286.7 L669.2 289.0 L674.9 291.3 L680.5 293.7 L685.9 296.1 L691.3 298.5 L696.7 301.0 L702.1 303.5 L707.4 306.1 L712.8 308.7 L718.0 311.4 L723.2 314.1 L728.4 316.8 L733.4 319.5 L738.4 322.3"/>
<path d="M162.7 262.5 L163.4 262.1 L164.1 261.6 L165.0 261.1 L166.0 260.5 L167.1 259.8 L168.4 259.1 L169.8 258.2 L171.3 257.3 L172.9 256.3 L174.7 255.2 L176.6 254.0 L178.7 252.6 L181.0 251.1 L183.3 249.5 L185.8 247.9 L188.4 246.2 L191.1 244.5 L193.9 242.9 L196.8 241.2 L199.7 239.7 L202.7 238.2 L205.8 236.7 L209.0 235.2 L212.2 233.7 L215.6 232.3 L219.0 230.8 L222.6 229.4 L226.2 228.0 L229.8 226.6 L233.6 225.3 L237.5 224.0 L241.6 222.7 L245.9 221.4 L250.3 220.1 L254.7 218.9 L259.1 217.7 L263.5 216.5 L267.7 215.5 L271.7 214.5 L275.5 213.6 L279.1 212.8 L282.5 212.1 L285.9 211.5 L289.1 211.0 L292.2 210.5 L295.2 210.1 L298.2 209.7 L301.0 209.4 L303.8 209.0 L306.5 208.7 L309.1 208.4 L311.5 208.1 L313.8 207.9 L316.0 207.7 L318.2 207.5 L320.3 207.4 L322.4 207.3 L324.6 207.2 L326.8 207.0 L329.1 206.9 L331.5 206.8 L334.0 206.6 L336.6 206.5 L339.2 206.4 L341.8 206.3 L344.3 206.2 L346.9 206.1 L349.4 206.0 L351.8 206.0 L354.1 206.0 L356.2 206.0 L358.2 206.1 L360.1 206.1 L361.9 206.2 L363.6 206.3 L365.4 206.4 L367.3 206.5 L369.4 206.7 L371.6 206.9 L374.1 207.1 L376.9 207.3 L379.9 207.6 L383.2 207.9 L386.5 208.2 L390.0 208.6 L393.5 208.9 L397.0 209.3 L400.3 209.7 L403.6 210.1 L406.6 210.5 L409.4 210.9 L411.9 211.3 L414.3 211.7 L416.7 212.1 L419.0 212.5 L421.3 213.0 L423.7 213.5 L426.3 214.0 L429.0 214.6 L432.1 215.3 L435.5 216.1 L439.2 216.9 L443.1 217.9 L447.1 218.9 L451.3 219.9 L455.5 221.0 L459.6 222.0 L463.6 223.1 L467.4 224.1 L470.9 225.0 L473.9 225.8 L476.4 226.5 L478.5 227.0 L480.4 227.6 L482.4 228.1 L484.6 228.8 L487.2 229.6 L490.5 230.6 L494.6 231.9 L499.7 233.5 L506.1 235.6 L513.7 238.0 L522.3 240.8 L531.5 243.8 L541.1 247.0 L550.8 250.1 L560.3 253.3 L569.3 256.2 L577.5 258.9 L584.7 261.3 L590.8 263.3 L596.2 265.1 L601.0 266.7 L605.4 268.1 L609.4 269.4 L613.3 270.7 L617.2 272.1 L621.3 273.5 L625.6 275.1 L630.4 276.8 L635.5 278.7 L640.9 280.7 L646.3 282.7 L651.9 284.9 L657.5 287.0 L663.2 289.3 L668.8 291.6 L674.4 293.9 L680.0 296.2 L685.4 298.6 L690.8 301.0 L696.1 303.5 L701.4 306.0 L706.8 308.5 L712.0 311.1 L717.3 313.8 L722.4 316.4 L727.5 319.1 L732.6 321.9 L737.5 324.6 L742.4 327.4 L747.3 330.4 L752.3 333.4 L757.1 336.4 L761.9 339.5 L766.6 342.5 L771.0 345.5 L775.3 348.3 L779.4 351.1 L783.2 353.7 L785.9 355.8 L788.7 357.9 L791.4 360.0 L794.1 362.1 L796.9 364.2 L799.6 366.3 L802.3 368.4 L805.0 370.5 L807.8 372.6 L810.5 374.7 L816.1 379.6 L821.8 384.5 L827.4 389.4 L833.0 394.3 L838.6 399.2 L844.3 404.1 L849.9 409.0 L855.5 413.9 L861.2 418.8 L866.8 423.7 L869.8 427.1 L872.8 430.5 L875.8 434.0 L878.8 437.4 L881.8 440.8 L884.7 444.2 L887.7 447.6 L890.7 451.1 L893.7 454.5 L896.7 457.9 L900.2 461.9 L903.8 465.9 L907.3 470.0 L910.8 474.0 L914.4 478.0 L917.9 482.0 L921.4 486.0 L924.9 490.1 L928.5 494.1 L932.0 498.1 L935.0 502.8 L938.0 507.5 L941.1 512.1 L944.1 516.8 L947.1 521.5 L950.1 526.2 L953.1 530.9 L956.2 535.5 L959.2 540.2 L962.2 544.9 L965.2 549.6 L968.2 554.3 L971.3 558.9 L974.3 563.6 L977.3 568.3 L980.3 573.0 L983.3 577.7 L986.4 582.3 L989.4 587.0 L992.4 591.7"/>
<path d="M162.7 262.5 L163.4 262.1 L164.1 261.6 L165.0 261.1 L166.0 260.5 L167.1 259.8 L168.4 259.0 L169.7 258.2 L171.3 257.3 L172.9 256.3 L174.7 255.2 L176.6 254.0 L178.8 252.6 L181.0 251.2 L183.4 249.6 L185.9 248.0 L188.6 246.4 L191.3 244.7 L194.1 243.1 L197.0 241.6 L200.0 240.1 L203.0 238.7 L206.2 237.3 L209.4 235.9 L212.7 234.5 L216.1 233.1 L219.7 231.8 L223.3 230.5 L226.9 229.3 L230.7 228.1 L234.5 226.9 L238.5 225.9 L242.8 224.8 L247.2 223.8 L251.6 222.8 L256.2 221.9 L260.7 221.0 L265.1 220.1 L269.4 219.3 L273.5 218.6 L277.4 217.8 L281.0 217.2 L284.4 216.5 L287.7 216.0 L290.9 215.4 L294.0 214.9 L296.9 214.5 L299.8 214.0 L302.6 213.6 L305.4 213.3 L308.0 212.9 L310.6 212.6 L313.0 212.4 L315.3 212.1 L317.5 211.9 L319.6 211.8 L321.7 211.7 L323.8 211.5 L325.9 211.4 L328.1 211.3 L330.4 211.2 L332.8 211.0 L335.3 210.9 L337.8 210.8 L340.4 210.6 L342.9 210.5 L345.5 210.4 L348.0 210.3 L350.5 210.3 L352.8 210.2 L355.1 210.2 L357.2 210.2 L359.2 210.3 L361.0 210.3 L362.8 210.4 L364.6 210.5 L366.4 210.6 L368.3 210.8 L370.3 210.9 L372.5 211.1 L375.0 211.3 L377.7 211.6 L380.8 211.8 L384.0 212.1 L387.3 212.4 L390.8 212.8 L394.3 213.1 L397.7 213.5 L401.1 213.9 L404.3 214.3 L407.3 214.7 L410.0 215.1 L412.5 215.4 L414.9 215.8 L417.2 216.2 L419.4 216.6 L421.7 217.1 L424.0 217.6 L426.6 218.1 L429.3 218.7 L432.3 219.4 L435.7 220.2 L439.3 221.0 L443.2 222.0 L447.3 222.9 L451.4 224.0 L455.5 225.0 L459.6 226.1 L463.6 227.1 L467.4 228.1 L470.9 229.1 L473.9 229.9 L476.4 230.5 L478.5 231.1 L480.4 231.6 L482.4 232.2 L484.5 232.9 L487.2 233.7 L490.4 234.7 L494.5 236.0 L499.6 237.6 L506.0 239.7 L513.6 242.1 L522.2 244.9 L531.4 247.9 L541.0 251.0 L550.7 254.2 L560.2 257.3 L569.2 260.3 L577.4 263.0 L584.5 265.3 L590.6 267.3 L596.0 269.1 L600.8 270.7 L605.1 272.1 L609.2 273.4 L613.1 274.7 L616.9 276.1 L621.0 277.5 L625.3 279.0 L630.0 280.8 L635.2 282.7 L640.5 284.7 L645.9 286.7 L651.5 288.8 L657.1 291.0 L662.7 293.2 L668.4 295.5 L674.0 297.8 L679.5 300.1 L684.9 302.5 L690.2 304.9 L695.5 307.3 L700.8 309.8 L706.1 312.4 L711.3 314.9 L716.5 317.6 L721.6 320.2 L726.7 322.9 L731.6 325.6 L736.5 328.3"/>
<path d="M162.7 262.5 L163.4 262.1 L164.1 261.6 L165.0 261.1 L166.0 260.5 L167.1 259.8 L168.3 259.0 L169.7 258.2 L171.2 257.2 L172.9 256.3 L174.7 255.2 L176.7 254.0 L178.8 252.7 L181.1 251.3 L183.5 249.7 L186.0 248.1 L188.7 246.5 L191.4 245.0 L194.3 243.4 L197.2 241.9 L200.3 240.5 L203.4 239.2 L206.6 237.9 L209.9 236.6 L213.3 235.4 L216.8 234.1 L220.3 232.9 L224.0 231.8 L227.8 230.7 L231.6 229.7 L235.5 228.8 L239.6 227.9 L244.0 227.1 L248.5 226.4 L253.1 225.8 L257.8 225.2 L262.4 224.6 L267.0 224.1 L271.4 223.6 L275.5 223.1 L279.4 222.5 L283.0 221.9 L286.5 221.4 L289.8 220.8 L292.9 220.3 L295.9 219.7 L298.8 219.2 L301.7 218.8 L304.4 218.3 L307.1 217.9 L309.7 217.6 L312.3 217.3 L314.7 217.0 L316.9 216.8 L319.1 216.6 L321.2 216.5 L323.2 216.3 L325.3 216.2 L327.4 216.1 L329.6 216.0 L331.9 215.8 L334.2 215.7 L336.7 215.6 L339.2 215.4 L341.7 215.3 L344.2 215.2 L346.7 215.1 L349.2 215.0 L351.6 214.9 L354.0 214.9 L356.2 214.9 L358.3 214.9 L360.3 214.9 L362.1 215.0 L363.9 215.0 L365.6 215.1 L367.4 215.3 L369.3 215.4 L371.3 215.6 L373.5 215.8 L375.9 216.0 L378.7 216.2 L381.7 216.5 L384.9 216.7 L388.2 217.0 L391.7 217.4 L395.1 217.7 L398.5 218.1 L401.9 218.5 L405.0 218.8 L408.0 219.2 L410.7 219.6 L413.2 220.0 L415.5 220.4 L417.7 220.7 L419.9 221.2 L422.1 221.6 L424.4 222.1 L426.9 222.6 L429.6 223.2 L432.6 223.9 L435.9 224.6 L439.5 225.5 L443.4 226.4 L447.4 227.4 L451.5 228.4 L455.6 229.5 L459.7 230.5 L463.6 231.6 L467.4 232.6 L470.9 233.5 L473.9 234.3 L476.3 235.0 L478.4 235.6 L480.3 236.1 L482.3 236.7 L484.5 237.4 L487.1 238.2 L490.3 239.2 L494.4 240.5 L499.5 242.2 L505.9 244.2 L513.5 246.7 L522.1 249.4 L531.3 252.4 L540.9 255.5 L550.5 258.7 L560.0 261.8 L569.0 264.7 L577.2 267.4 L584.3 269.7 L590.4 271.7 L595.8 273.5 L600.5 275.1 L604.8 276.5 L608.9 277.8 L612.7 279.1 L616.6 280.5 L620.6 281.9 L624.9 283.4 L629.6 285.2 L634.7 287.0 L640.0 289.0 L645.5 291.0 L651.0 293.1 L656.6 295.3 L662.2 297.5 L667.9 299.7 L673.5 302.0 L678.9 304.4 L684.3 306.7 L689.6 309.1 L694.9 311.5 L700.1 314.0 L705.3 316.5 L710.5 319.1 L715.6 321.7 L720.7 324.3 L725.7 327.0 L730.6 329.6 L735.4 332.3 L740.2 335.1 L745.0 337.9 L749.8 340.8 L754.5 343.8 L759.1 346.7 L763.7 349.6 L768.0 352.5 L772.2 355.3 L776.1 357.9 L779.8 360.5 L782.5 362.5 L785.1 364.6 L787.8 366.6 L790.5 368.7 L793.2 370.7 L795.8 372.8 L798.5 374.8 L801.2 376.9 L803.8 378.9 L806.5 381.0 L812.0 385.8 L817.6 390.6 L823.1 395.4 L828.6 400.2 L834.2 405.0 L839.7 409.8 L845.2 414.6 L850.8 419.4 L856.3 424.2 L861.8 429.0 L864.7 432.4 L867.6 435.8 L870.5 439.2 L873.5 442.6 L876.4 446.0 L879.3 449.4 L882.2 452.8 L885.1 456.2 L888.0 459.6 L890.9 463.0 L894.4 466.9 L897.8 470.8 L901.3 474.7 L904.8 478.6 L908.3 482.5 L911.8 486.4 L915.3 490.4 L918.8 494.3 L922.3 498.2 L925.8 502.1 L928.8 506.7 L931.8 511.4 L934.7 516.0 L937.7 520.6 L940.7 525.2 L943.7 529.9 L946.7 534.5 L949.7 539.1 L952.7 543.8 L955.7 548.4 L958.7 553.0 L961.6 557.7 L964.6 562.3 L967.6 566.9 L970.6 571.6 L973.6 576.2 L976.6 580.8 L979.6 585.5 L982.6 590.1 L985.6 594.7"/>
<path d="M408.2 220.9 L410.9 221.3 L413.4 221.7 L415.7 222.0 L417.9 222.4 L420.1 222.8 L422.3 223.2 L424.5 223.7 L427.0 224.2 L429.7 224.8 L432.6 225.5 L436.0 226.3 L439.6 227.1 L443.4 228.1 L447.4 229.0 L451.5 230.1 L455.6 231.1 L459.7 232.2 L463.6 233.2 L467.4 234.2 L470.9 235.2 L473.9 236.0 L476.3 236.6 L478.4 237.2 L480.3 237.8 L482.3 238.4 L484.4 239.0 L487.1 239.8 L490.3 240.9 L494.4 242.2 L499.4 243.8 L505.8 245.8 L513.4 248.3 L522.0 251.1 L531.2 254.0 L540.8 257.2 L550.5 260.3 L559.9 263.4 L568.9 266.3 L577.1 269.0 L584.2 271.4 L590.3 273.4 L595.7 275.1 L600.4 276.7 L604.7 278.1 L608.8 279.4 L612.6 280.7 L616.5 282.1 L620.5 283.5 L624.8 285.0 L629.5 286.8 L634.6 288.6 L639.9 290.6 L645.3 292.6 L650.8 294.7 L656.4 296.9 L662.1 299.1 L667.7 301.3 L673.3 303.6 L678.7 305.9 L684.1 308.2 L689.4 310.6 L694.6 313.1 L699.9 315.5 L705.1 318.1 L710.2 320.6 L715.3 323.2 L720.4 325.8 L725.4 328.5 L730.2 331.1 L735.0 333.8"/>
<path d="M470.9 239.6 L473.9 240.4 L476.3 241.1 L478.4 241.7 L480.3 242.3 L482.2 242.9 L484.4 243.5 L487.0 244.4 L490.2 245.4 L494.3 246.7 L499.3 248.3 L505.7 250.4 L513.3 252.8 L521.9 255.6 L531.1 258.5 L540.7 261.6 L550.3 264.8 L559.8 267.8 L568.7 270.8 L576.9 273.4 L584.1 275.8 L590.1 277.8 L595.5 279.5 L600.2 281.1 L604.5 282.5 L608.5 283.8 L612.3 285.1 L616.1 286.5 L620.1 287.9 L624.4 289.4 L629.1 291.1 L634.2 293.0 L639.5 295.0 L644.9 297.0 L650.4 299.1 L656.0 301.2 L661.6 303.4 L667.2 305.6 L672.7 307.9 L678.2 310.2 L683.5 312.5 L688.8 314.9 L694.0 317.3 L699.2 319.7 L704.3 322.2 L709.4 324.8 L714.5 327.4 L719.5 330.0 L724.4 332.6 L729.2 335.2 L734.0 337.8 L738.7 340.5 L743.4 343.3 L748.0 346.2 L752.7 349.0 L757.2 351.9 L761.6 354.7 L765.8 357.5 L769.9 360.2 L773.8 362.8 L777.4 365.3 L780.0 367.3 L782.6 369.3 L785.3 371.4 L787.9 373.4 L790.5 375.4 L793.1 377.4 L795.8 379.4 L798.4 381.5 L801.0 383.5 L803.7 385.5 L809.1 390.2 L814.6 395.0 L820.1 399.7 L825.5 404.4 L831.0 409.2 L836.4 413.9 L841.9 418.6 L847.4 423.4 L852.8 428.1 L858.3 432.8 L861.1 436.2 L864.0 439.6 L866.8 443.0 L869.7 446.4 L872.5 449.7 L875.3 453.1 L878.2 456.5 L881.0 459.9 L883.9 463.2 L886.7 466.6 L890.2 470.4 L893.6 474.3 L897.1 478.1 L900.6 481.9 L904.0 485.8 L907.5 489.6 L910.9 493.4 L914.4 497.3 L917.9 501.1 L921.3 504.9 L924.3 509.5 L927.3 514.1 L930.2 518.7 L933.2 523.3 L936.2 527.9 L939.1 532.5 L942.1 537.1 L945.1 541.7 L948.0 546.3 L951.0 550.9 L954.0 555.5 L956.9 560.1 L959.9 564.7 L962.9 569.3 L965.8 573.9 L968.8 578.5 L971.8 583.1 L974.7 587.7 L977.7 592.3 L980.7 596.9"/>
<path d="M173.1 279.2 L173.8 279.1 L174.7 278.9 L175.7 278.8 L176.8 278.7 L178.1 278.5 L179.5 278.2 L181.0 277.9 L182.7 277.3 L184.5 276.7 L186.4 275.8 L188.5 274.7 L190.8 273.4 L193.2 271.8 L195.8 270.2 L198.5 268.4 L201.3 266.6 L204.2 264.8 L207.1 263.0 L210.1 261.3 L213.0 259.7 L216.0 258.2 L219.0 256.7 L222.0 255.3 L225.1 253.9 L228.3 252.5 L231.5 251.1 L234.8 249.8 L238.2 248.5 L241.7 247.2 L245.2 245.9 L248.9 244.7 L252.8 243.4 L256.9 242.2 L261.0 241.0 L265.2 239.8 L269.3 238.7 L273.4 237.6 L277.4 236.6 L281.2 235.7 L284.8 234.8 L288.2 234.0 L291.5 233.4 L294.6 232.7 L297.7 232.2 L300.6 231.7 L303.5 231.3 L306.3 230.9 L309.0 230.5 L311.6 230.1 L314.2 229.8 L316.7 229.5 L319.0 229.3 L321.2 229.1 L323.3 228.9 L325.3 228.8 L327.3 228.6 L329.4 228.5 L331.4 228.4 L333.5 228.3 L335.7 228.2 L338.0 228.1 L340.3 227.9 L342.7 227.8 L345.2 227.6 L347.6 227.5 L350.0 227.4 L352.4 227.3 L354.7 227.2 L357.0 227.1 L359.2 227.1 L361.2 227.1 L363.1 227.1 L364.9 227.2 L366.6 227.3 L368.4 227.4 L370.1 227.5 L372.0 227.7 L373.9 227.8 L376.1 228.0 L378.5 228.2 L381.2 228.4 L384.1 228.7 L387.3 228.9 L390.6 229.2 L394.0 229.5 L397.3 229.9 L400.7 230.2 L403.9 230.6 L407.0 230.9 L409.9 231.3 L412.5 231.7 L414.8 232.0 L417.0 232.4 L419.1 232.7 L421.2 233.1 L423.2 233.5 L425.4 234.0 L427.7 234.5 L430.3 235.0 L433.2 235.7 L436.4 236.5 L440.0 237.3 L443.7 238.2 L447.7 239.2 L451.7 240.2 L455.8 241.3 L459.8 242.3 L463.7 243.3 L467.4 244.3 L470.9 245.3 L473.9 246.1 L476.3 246.8 L478.3 247.4 L480.2 248.0 L482.1 248.6 L484.3 249.3 L486.9 250.1 L490.1 251.2 L494.1 252.5 L499.2 254.1 L505.6 256.1 L513.2 258.6 L521.7 261.3 L530.9 264.3 L540.5 267.3 L550.1 270.5 L559.6 273.5 L568.5 276.4 L576.7 279.1 L583.8 281.4 L589.8 283.4 L595.2 285.1 L599.9 286.7 L604.1 288.1 L608.1 289.4 L611.9 290.7 L615.7 292.1 L619.7 293.5 L623.9 295.0 L628.6 296.7 L633.7 298.6 L638.9 300.5 L644.3 302.5 L649.8 304.6 L655.4 306.7 L661.0 308.9 L666.6 311.1 L672.1 313.3 L677.5 315.6 L682.8 317.9 L688.0 320.2 L693.2 322.6 L698.3 325.1 L703.4 327.6 L708.4 330.1 L713.4 332.7 L718.3 335.2 L723.2 337.8 L727.9 340.4 L732.6 343.0 L737.2 345.6 L741.8 348.4 L746.4 351.1 L750.9 353.9 L755.3 356.7 L759.6 359.5 L763.8 362.2 L767.8 364.9 L771.6 367.4 L775.1 369.8 L777.7 371.8 L780.3 373.8 L782.9 375.8 L785.5 377.8 L788.0 379.8 L790.6 381.7 L793.2 383.7 L795.8 385.7 L798.4 387.7 L801.0 389.7 L806.4 394.4 L811.8 399.0 L817.2 403.7 L822.6 408.4 L828.0 413.0 L833.4 417.7 L838.8 422.4 L844.2 427.1 L849.6 431.7 L855.0 436.4 L857.8 439.8 L860.6 443.1 L863.3 446.5 L866.1 449.8 L868.9 453.2 L871.7 456.6 L874.5 459.9 L877.2 463.3 L880.0 466.6 L882.8 470.0 L886.2 473.8 L889.7 477.5 L893.1 481.3 L896.6 485.0 L900.0 488.8 L903.4 492.6 L906.9 496.3 L910.3 500.1 L913.8 503.8 L917.2 507.6 L919.5 511.4 L921.9 515.2 L924.2 519.0 L926.5 522.8 L928.9 526.5 L931.2 530.3 L933.5 534.1 L935.8 537.9 L938.2 541.7 L940.5 545.5 L943.3 549.7 L946.1 553.8 L948.9 558.0 L951.7 562.1 L954.5 566.3 L957.3 570.5 L960.1 574.6 L962.9 578.8 L965.7 582.9 L968.5 587.1"/>
<path d="M114.8 207.6 L117.0 207.3 L119.7 206.9 L123.0 206.4 L126.7 205.8 L130.7 205.2 L134.9 204.6 L139.1 204.0 L143.4 203.4 L147.6 202.8 L151.5 202.2 L155.4 201.6 L159.4 201.1 L163.5 200.5 L167.6 200.0 L171.8 199.4 L175.9 198.8 L179.9 198.3 L183.7 197.7 L187.4 197.1 L190.8 196.6 L193.9 196.1 L196.7 195.6 L199.2 195.2 L201.5 194.7 L203.8 194.3 L206.1 193.8 L208.6 193.3 L211.2 192.7 L214.1 192.1 L217.4 191.3 L221.1 190.4 L225.2 189.3 L229.6 188.2 L234.1 186.9 L238.8 185.7 L243.5 184.4 L248.2 183.2 L252.7 182.0 L257.1 181.0 L261.1 180.1 L264.9 179.3 L268.5 178.6 L272.1 178.0 L275.6 177.5 L278.9 177.0 L282.2 176.6 L285.4 176.2 L288.4 175.8 L291.4 175.4 L294.3 175.1 L297.0 174.8 L299.5 174.5 L301.9 174.3 L304.1 174.2 L306.3 174.0 L308.4 173.9 L310.6 173.8 L312.8 173.6 L315.1 173.5 L317.6 173.4 L320.2 173.2 L322.9 173.0 L325.7 172.8 L328.5 172.6 L331.4 172.5 L334.2 172.3 L337.0 172.2 L339.8 172.1 L342.4 172.0 L344.9 172.0 L347.3 172.0 L349.5 172.1 L351.5 172.1 L353.5 172.3 L355.5 172.4 L357.4 172.6 L359.5 172.8 L361.8 172.9 L364.2 173.2 L366.9 173.4 L370.0 173.6 L373.2 173.8 L376.7 174.0 L380.4 174.3 L384.1 174.5 L387.9 174.8 L391.7 175.1 L395.3 175.4 L398.8 175.8 L402.1 176.2 L405.1 176.6 L407.9 177.1 L410.6 177.5 L413.1 178.0 L415.7 178.5 L418.2 179.1 L420.9 179.7 L423.7 180.3 L426.7 181.0 L430.0 181.8 L433.6 182.6 L437.4 183.5 L441.6 184.5 L445.8 185.5 L450.2 186.6 L454.5 187.7 L458.8 188.7 L463.0 189.8 L466.9 190.8 L470.6 191.8 L473.8 192.7 L476.4 193.4 L478.6 194.0 L480.7 194.6 L482.8 195.3 L485.1 196.0 L487.8 196.8 L491.1 197.9 L495.3 199.3 L500.5 200.9 L507.0 203.0 L514.7 205.5 L523.3 208.3 L532.6 211.3 L542.2 214.4 L552.0 217.5 L561.5 220.6 L570.5 223.6 L578.8 226.3 L586.0 228.7 L592.2 230.8 L597.7 232.6 L602.5 234.2 L606.9 235.7 L611.0 237.1 L615.0 238.5 L619.0 239.9 L623.2 241.4 L627.7 243.0 L632.7 244.9 L638.0 246.8 L643.6 248.8 L649.4 250.9 L655.3 253.0 L661.3 255.2 L667.3 257.5 L673.3 259.8 L679.3 262.2 L685.3 264.6 L691.1 267.2 L696.8 269.7 L702.6 272.4 L708.3 275.2 L714.1 278.0 L719.8 280.9 L725.5 283.8 L731.1 286.8 L736.6 289.8 L742.0 292.8 L747.3 295.8 L752.5 298.8 L757.7 301.9 L762.9 305.1 L768.0 308.4 L773.0 311.6 L777.9 314.8 L782.7 318.0 L787.2 321.1 L791.5 324.0 L795.6 326.8 L798.6 329.2 L801.7 331.5 L804.8 333.9 L807.8 336.2 L810.9 338.5 L813.9 340.9 L817.0 343.2 L820.1 345.6 L823.1 347.9 L826.2 350.3 L832.2 355.5 L838.1 360.7 L844.1 365.9 L850.1 371.1 L856.1 376.3 L862.0 381.5 L868.0 386.8 L874.0 392.0 L880.0 397.2 L885.9 402.4 L889.3 406.2 L892.7 410.1 L896.0 413.9 L899.4 417.8 L902.8 421.6 L906.1 425.5 L909.5 429.4 L912.9 433.2 L916.2 437.1 L919.6 440.9 L923.6 444.8 L927.5 448.6 L931.5 452.5 L935.5 456.4 L939.4 460.2 L943.4 464.1 L947.4 468.0 L951.3 471.8 L955.3 475.7 L959.2 479.6 L961.9 482.3 L964.5 484.9 L967.2 487.6 L969.8 490.3 L972.5 493.0 L975.1 495.7 L977.8 498.4 L980.4 501.1 L983.1 503.8 L985.7 506.5 L988.4 509.2 L991.0 511.9 L993.7 514.6 L996.3 517.3 L999.0 520.0 L1001.6 522.7 L1004.3 525.4 L1006.9 528.1 L1009.6 530.7 L1012.2 533.4"/>
<path d="M217.4 191.8 L220.1 191.2 L223.6 190.3 L227.8 189.3 L232.5 188.2 L237.5 187.0 L242.7 185.8 L247.8 184.6 L252.8 183.4 L257.5 182.4 L261.7 181.6 L265.5 180.8 L269.2 180.2 L272.7 179.6 L276.2 179.0 L279.6 178.5 L282.8 178.1 L285.9 177.7 L289.0 177.3 L291.9 176.9 L294.8 176.6 L297.5 176.3 L300.0 176.0 L302.4 175.8 L304.6 175.6 L306.8 175.5 L308.9 175.3 L311.1 175.2 L313.3 175.1 L315.6 175.0 L318.1 174.8 L320.7 174.7 L323.4 174.5 L326.1 174.3 L329.0 174.1 L331.8 173.9 L334.6 173.8 L337.4 173.7 L340.2 173.6 L342.8 173.5 L345.4 173.5 L347.7 173.5 L349.9 173.5 L351.9 173.6 L353.9 173.7 L355.8 173.9 L357.8 174.0 L359.9 174.2 L362.1 174.4 L364.5 174.6 L367.2 174.8 L370.2 175.0 L373.5 175.3 L377.0 175.5 L380.6 175.7 L384.4 176.0 L388.2 176.3 L391.9 176.6 L395.5 176.9 L399.0 177.3 L402.3 177.7 L405.3 178.1 L408.1 178.5 L410.7 179.0 L413.3 179.5 L415.8 180.0 L418.4 180.6 L421.0 181.1 L423.8 181.8 L426.8 182.5 L430.0 183.2 L433.6 184.0 L437.5 185.0 L441.6 185.9 L445.9 187.0 L450.2 188.0 L454.6 189.1 L458.8 190.2 L463.0 191.2 L467.0 192.3 L470.6 193.2 L473.8 194.1 L476.4 194.8 L478.6 195.4 L480.7 196.0 L482.7 196.7 L485.0 197.4 L487.8 198.2 L491.1 199.3 L495.3 200.7 L500.5 202.3 L506.9 204.4 L514.6 206.9 L523.3 209.6 L532.5 212.6 L542.2 215.8 L551.9 218.9 L561.4 222.0 L570.5 225.0 L578.8 227.7 L586.0 230.1 L592.2 232.2 L597.6 234.0 L602.4 235.6 L606.9 237.1 L611.0 238.5 L615.0 239.9 L619.0 241.3 L623.1 242.8 L627.6 244.5 L632.6 246.3 L637.9 248.2 L643.5 250.2 L649.3 252.3 L655.1 254.4 L661.1 256.6 L667.1 258.9 L673.2 261.2 L679.2 263.6 L685.1 266.0 L690.9 268.5 L696.8 271.2 L703.1 274.3 L709.6 277.5 L716.1 280.8 L722.5 284.1 L728.6 287.4 L734.3 290.3 L739.3 293.0 L743.6 295.3 L746.9 297.0"/>
</g>
<path d="M151.4 176.1 L228.5 165.5 L228.5 165.5 L231.3 164.6 L234.9 163.4 L239.2 162.0 L244.1 160.5 L249.2 158.8 L254.6 157.1 L259.9 155.4 L265.1 153.9 L270.0 152.6 L274.3 151.5 L278.3 150.7 L282.1 150.0 L285.9 149.4 L289.5 148.9 L293.1 148.5 L296.5 148.2 L299.8 147.9 L303.0 147.6 L306.1 147.3 L309.0 147.0 L311.8 146.7 L314.3 146.4 L316.6 146.2 L318.8 145.9 L320.9 145.7 L323.0 145.6 L325.1 145.4 L327.3 145.2 L329.6 145.1 L332.0 144.9 L334.6 144.7 L337.3 144.6 L340.1 144.4 L343.0 144.3 L345.9 144.2 L348.8 144.0 L351.7 143.9 L354.4 143.9 L357.1 143.8 L359.7 143.8 L362.1 143.8 L364.3 143.8 L366.3 143.9 L368.3 143.9 L370.2 144.0 L372.2 144.1 L374.3 144.3 L376.6 144.4 L379.1 144.6 L381.8 144.9 L384.9 145.2 L388.2 145.6 L391.8 146.0 L395.5 146.4 L399.3 146.9 L403.2 147.3 L407.0 147.8 L410.8 148.3 L414.3 148.8 L417.7 149.3 L420.8 149.8 L423.7 150.2 L426.4 150.6 L429.1 151.0 L431.7 151.5 L434.4 151.9 L437.1 152.5 L440.0 153.0 L443.1 153.7 L446.5 154.4 L450.2 155.2 L454.2 156.2 L458.5 157.2 L462.9 158.3 L467.4 159.4 L471.9 160.5 L476.4 161.6 L480.7 162.7 L484.8 163.8 L488.6 164.8 L491.9 165.7 L494.7 166.4 L497.0 167.0 L499.2 167.6 L501.4 168.2 L503.9 168.9 L506.7 169.7 L510.1 170.7 L514.4 172.1 L519.6 173.7 L526.1 175.8 L533.7 178.2 L542.2 181.0 L551.4 184.0 L560.9 187.1 L570.5 190.2 L579.9 193.3" fill="none" stroke="#000" stroke-width="1" stroke-opacity=".6" stroke-dasharray="5 2"/>
<g fill="none" stroke="#222" stroke-width="0.85" stroke-opacity="0.6" stroke-dasharray="1 1.4">
<path d="M133.2 191.4 L135.5 191.1 L138.4 190.7 L142.0 190.2 L146.0 189.7 L150.2 189.1 L154.6 188.6 L158.9 188.0 L163.0 187.4 L166.8 186.9 L170.0 186.5 L172.8 186.1 L175.4 185.8 L177.8 185.5 L180.1 185.2 L182.2 184.9 L184.2 184.6 L186.2 184.4 L188.1 184.1 L190.0 183.8 L192.0 183.5 L193.8 183.2 L195.4 183.0 L196.8 182.9 L198.2 182.7 L199.6 182.5 L201.0 182.3 L202.7 182.0 L204.8 181.5 L207.2 181.0 L210.1 180.3 L213.6 179.4 L217.7 178.3 L222.2 177.0 L227.0 175.6 L232.1 174.1 L237.2 172.6 L242.2 171.2 L247.1 169.9 L251.8 168.7 L256.0 167.7 L259.9 166.9 L263.7 166.2 L267.4 165.6 L270.9 165.0 L274.3 164.6 L277.7 164.2 L280.9 163.8 L284.0 163.5 L287.0 163.1 L289.9 162.8 L292.7 162.5 L295.2 162.3 L297.6 162.1 L299.9 161.9 L302.1 161.7 L304.3 161.6 L306.5 161.5 L308.8 161.4 L311.1 161.3 L313.6 161.1 L316.2 160.9 L319.0 160.7 L321.8 160.5 L324.7 160.3 L327.6 160.1 L330.5 159.9 L333.4 159.7 L336.2 159.6 L338.9 159.5 L341.5 159.5 L343.9 159.5 L346.2 159.6 L348.4 159.7 L350.4 159.9 L352.5 160.0 L354.6 160.2 L356.8 160.4 L359.2 160.7 L361.7 160.9 L364.5 161.1 L367.6 161.3 L371.0 161.5 L374.5 161.8 L378.3 162.0 L382.1 162.2 L385.9 162.5 L389.7 162.8 L393.5 163.1 L397.0 163.5 L400.4 163.9 L403.5 164.3 L406.4 164.8 L409.2 165.2 L411.8 165.7 L414.5 166.2 L417.1 166.8 L419.9 167.4 L422.8 168.0 L425.8 168.7 L429.2 169.5 L432.9 170.4 L436.8 171.3 L441.0 172.3 L445.3 173.4 L449.7 174.5 L454.1 175.6 L458.4 176.7 L462.7 177.8 L466.7 178.9 L470.4 179.9 L473.6 180.8 L476.3 181.5 L478.6 182.2 L480.7 182.8 L482.8 183.5 L485.2 184.2 L488.0 185.1 L491.4 186.2 L495.6 187.5 L500.8 189.2 L507.3 191.3 L515.0 193.8 L523.7 196.5 L533.0 199.5 L542.6 202.7 L552.4 205.8 L561.9 208.9 L571.0 211.9 L579.2 214.6 L586.5 217.0 L592.7 219.1 L598.2 220.9 L603.1 222.5 L607.5 224.0 L611.7 225.4 L615.7 226.7 L619.7 228.1 L623.9 229.6 L628.5 231.3 L633.5 233.1 L638.9 235.1 L644.6 237.1 L650.4 239.2 L656.4 241.4 L662.4 243.7 L668.5 246.0 L674.7 248.4 L680.8 250.8 L686.8 253.3 L692.7 255.9 L698.6 258.6 L704.5 261.3 L710.4 264.2 L716.3 267.1 L722.2 270.0 L728.0 273.0 L733.7 276.1 L739.4 279.1 L745.0 282.2 L750.4 285.3 L755.8 288.4 L761.1 291.7 L766.4 295.0 L771.7 298.3 L776.8 301.6 L781.8 304.9 L786.7 308.2 L791.4 311.4 L795.8 314.4 L800.0 317.3 L803.2 319.7 L806.3 322.1 L809.5 324.5 L812.6 326.9 L815.8 329.4 L819.0 331.8 L822.1 334.2 L825.3 336.6 L828.4 339.0 L831.6 341.4 L837.7 346.7 L843.9 352.0 L850.0 357.3 L856.2 362.6 L862.3 367.9 L868.4 373.3 L874.6 378.6 L880.7 383.9 L886.9 389.2 L893.0 394.5 L896.6 398.6 L900.1 402.7 L903.7 406.8 L907.2 410.9 L910.8 414.9 L914.4 419.0 L917.9 423.1 L921.5 427.2 L925.0 431.3 L928.6 435.4 L932.8 439.1 L937.0 442.7 L941.2 446.4 L945.4 450.0 L949.5 453.7 L953.7 457.4 L957.9 461.0 L962.1 464.7 L966.3 468.3 L970.5 472.0 L972.9 473.6 L975.3 475.3 L977.8 476.9 L980.2 478.6 L982.6 480.2 L985.0 481.8 L987.4 483.5 L989.9 485.1 L992.3 486.8 L994.7 488.4 L997.1 490.0 L999.5 491.7 L1002.0 493.3 L1004.4 495.0 L1006.8 496.6 L1009.2 498.2 L1011.6 499.9 L1014.1 501.5 L1016.5 503.2 L1018.9 504.8" stroke-opacity="0.95" stroke-width="1"/>
<path d="M162.7 262.4 L163.3 262.0 L164.1 261.6 L165.0 261.0 L166.0 260.4 L167.1 259.7 L168.3 259.0 L169.7 258.1 L171.2 257.2 L172.9 256.2 L174.6 255.1 L176.6 253.9 L178.7 252.5 L180.9 251.0 L183.3 249.4 L185.7 247.8 L188.3 246.1 L191.0 244.4 L193.8 242.7 L196.7 241.0 L199.5 239.5 L202.5 237.9 L205.6 236.3 L208.7 234.7 L211.9 233.1 L215.2 231.6 L218.6 230.0 L222.1 228.5 L225.6 227.0 L229.3 225.5 L233.0 224.2 L236.9 222.8 L241.0 221.5 L245.3 220.2 L249.7 218.9 L254.1 217.7 L258.6 216.5 L262.9 215.4 L267.1 214.3 L271.2 213.3 L275.0 212.5 L278.6 211.7 L282.0 211.0 L285.4 210.4 L288.6 209.8 L291.7 209.4 L294.8 209.0 L297.7 208.6 L300.6 208.2 L303.3 207.9 L306.1 207.5 L308.7 207.2 L311.1 207.0 L313.4 206.7 L315.6 206.6 L317.7 206.4 L319.9 206.2 L322.0 206.1 L324.1 206.0 L326.4 205.9 L328.7 205.7 L331.1 205.6 L333.6 205.5 L336.2 205.3 L338.8 205.2 L341.4 205.1 L344.0 205.0 L346.6 204.9 L349.1 204.9 L351.5 204.8 L353.8 204.8 L355.9 204.8 L357.9 204.9 L359.8 204.9 L361.6 205.0 L363.3 205.1 L365.2 205.2 L367.1 205.4 L369.1 205.5 L371.3 205.7 L373.8 205.9 L376.6 206.2 L379.7 206.4 L382.9 206.7 L386.3 207.0 L389.8 207.4 L393.3 207.7 L396.8 208.1 L400.2 208.5 L403.4 208.9 L406.4 209.3 L409.2 209.7 L411.8 210.1 L414.2 210.5 L416.5 210.9 L418.8 211.3 L421.2 211.8 L423.6 212.3 L426.2 212.8 L429.0 213.5 L432.0 214.1 L435.4 214.9 L439.1 215.8 L443.0 216.7 L447.1 217.7 L451.3 218.8 L455.4 219.8 L459.6 220.9 L463.6 221.9 L467.4 222.9 L470.9 223.8 L473.9 224.6 L476.4 225.3 L478.5 225.9 L480.5 226.4 L482.4 227.0 L484.6 227.6 L487.3 228.4 L490.5 229.4 L494.6 230.7 L499.7 232.4 L506.1 234.4 L513.8 236.9 L522.3 239.7 L531.6 242.7 L541.2 245.8 L550.9 249.0 L560.4 252.1 L569.4 255.1 L577.6 257.8 L584.7 260.2 L590.9 262.2 L596.3 263.9 L601.1 265.5 L605.4 267.0 L609.5 268.3 L613.4 269.6 L617.3 271.0 L621.4 272.4 L625.7 273.9 L630.5 275.7 L635.6 277.6 L641.0 279.6 L646.4 281.6 L652.0 283.8 L657.7 285.9 L663.3 288.2 L669.0 290.4 L674.6 292.8 L680.2 295.1 L685.6 297.5 L691.0 299.9 L696.4 302.4 L701.7 304.9 L707.1 307.5 L712.3 310.1 L717.6 312.7 L722.8 315.4 L727.9 318.1 L732.9 320.8 L737.9 323.6"/>
<path d="M254.4 218.2 L258.8 217.0 L263.2 215.9 L267.4 214.8 L271.4 213.8 L275.2 212.9 L278.8 212.2 L282.2 211.5 L285.6 210.9 L288.8 210.3 L291.9 209.9 L295.0 209.4 L297.9 209.1 L300.8 208.7 L303.5 208.4 L306.3 208.0 L308.8 207.7 L311.3 207.5 L313.6 207.2 L315.8 207.0 L317.9 206.9 L320.0 206.7 L322.2 206.6 L324.3 206.5 L326.5 206.4 L328.9 206.2 L331.3 206.1 L333.8 206.0 L336.4 205.8 L339.0 205.7 L341.6 205.6 L344.1 205.5 L346.7 205.4 L349.2 205.4 L351.6 205.3 L353.9 205.3 L356.1 205.3 L358.1 205.4 L359.9 205.4 L361.7 205.5 L363.5 205.6 L365.3 205.7 L367.2 205.9 L369.2 206.0 L371.5 206.2 L373.9 206.4 L376.7 206.7 L379.8 206.9 L383.0 207.2 L386.4 207.5 L389.9 207.9 L393.4 208.2 L396.9 208.6 L400.2 209.0 L403.5 209.4 L406.5 209.8 L409.3 210.2 L411.9 210.6 L414.3 211.0 L416.6 211.4 L418.9 211.8 L421.2 212.3 L423.6 212.8 L426.2 213.3 L429.0 213.9" stroke-opacity=".8" stroke-width="1.6" stroke-dasharray="1.5 1"/>
<path d="M172.4 278.0 L173.1 277.9 L174.0 277.7 L174.9 277.6 L176.1 277.4 L177.3 277.2 L178.7 276.9 L180.2 276.5 L181.9 275.9 L183.7 275.2 L185.6 274.4 L187.7 273.2 L189.9 271.9 L192.4 270.4 L194.9 268.7 L197.6 267.0 L200.4 265.2 L203.3 263.3 L206.2 261.6 L209.1 259.9 L212.1 258.3 L215.0 256.8 L218.0 255.3 L221.1 253.9 L224.2 252.5 L227.4 251.1 L230.6 249.7 L234.0 248.3 L237.4 247.0 L240.8 245.7 L244.4 244.5 L248.1 243.2 L252.0 242.0 L256.1 240.7 L260.2 239.5 L264.4 238.3 L268.6 237.2 L272.7 236.1 L276.7 235.1 L280.6 234.2 L284.1 233.3 L287.6 232.6 L290.8 231.9 L294.0 231.3 L297.1 230.7 L300.0 230.2 L302.9 229.8 L305.7 229.4 L308.4 229.0 L311.1 228.7 L313.7 228.3 L316.1 228.0 L318.5 227.8 L320.7 227.6 L322.8 227.4 L324.8 227.3 L326.8 227.2 L328.9 227.0 L330.9 226.9 L333.0 226.8 L335.2 226.7 L337.5 226.6 L339.9 226.4 L342.3 226.3 L344.7 226.1 L347.2 226.0 L349.6 225.9 L352.0 225.8 L354.4 225.7 L356.6 225.6 L358.8 225.6 L360.9 225.6 L362.8 225.7 L364.6 225.7 L366.3 225.8 L368.0 225.9 L369.8 226.0 L371.6 226.2 L373.6 226.3 L375.8 226.5 L378.2 226.7 L380.9 226.9 L383.8 227.2 L387.0 227.5 L390.3 227.8 L393.7 228.1 L397.1 228.4 L400.4 228.7 L403.7 229.1 L406.8 229.5 L409.7 229.8 L412.3 230.2 L414.6 230.6 L416.8 230.9 L418.9 231.3 L421.0 231.7 L423.1 232.1 L425.3 232.5 L427.6 233.0 L430.2 233.6 L433.1 234.3 L436.4 235.0 L439.9 235.9 L443.7 236.8 L447.7 237.8 L451.7 238.8 L455.8 239.8 L459.8 240.9 L463.7 241.9 L467.4 242.9 L470.9 243.9 L473.9 244.7 L476.3 245.4 L478.3 246.0 L480.2 246.6 L482.1 247.2 L484.3 247.9 L486.9 248.7 L490.1 249.7 L494.2 251.0 L499.2 252.7 L505.6 254.7 L513.2 257.1 L521.7 259.9 L530.9 262.8 L540.5 265.9 L550.2 269.0 L559.6 272.1 L568.6 275.0 L576.8 277.7 L583.9 280.0 L589.9 282.0 L595.2 283.7 L599.9 285.3 L604.2 286.7 L608.2 288.0 L612.0 289.3 L615.8 290.7 L619.8 292.1 L624.0 293.6 L628.7 295.3 L633.8 297.2 L639.0 299.1 L644.4 301.1 L650.0 303.2 L655.5 305.3 L661.1 307.5 L666.7 309.7 L672.3 312.0 L677.7 314.2 L683.0 316.5 L688.2 318.9 L693.4 321.3 L698.5 323.8 L703.6 326.2 L708.7 328.8 L713.7 331.3 L718.6 333.9 L723.5 336.5 L728.3 339.1 L732.9 341.7 L737.6 344.4 L742.2 347.1 L746.8 349.9 L751.4 352.7 L755.8 355.5 L760.1 358.3 L764.3 361.0 L768.3 363.7 L772.1 366.3 L775.7 368.7 L778.3 370.7 L780.9 372.7 L783.5 374.7 L786.1 376.7 L788.7 378.7 L791.3 380.7 L793.9 382.7 L796.5 384.7 L799.1 386.7 L801.7 388.6 L807.1 393.3 L812.5 398.0 L817.9 402.7 L823.3 407.4 L828.7 412.1 L834.2 416.8 L839.6 421.5 L845.0 426.1 L850.4 430.8 L855.8 435.5 L858.6 438.9 L861.4 442.2 L864.2 445.6 L867.0 449.0 L869.8 452.3 L872.6 455.7 L875.4 459.1 L878.2 462.4 L881.0 465.8 L883.8 469.2 L887.2 472.9 L890.7 476.7 L894.1 480.5 L897.6 484.3 L901.0 488.0 L904.5 491.8 L907.9 495.6 L911.3 499.4 L914.8 503.2 L918.2 506.9 L920.9 511.1 L923.6 515.2 L926.2 519.4 L928.9 523.5 L931.6 527.6 L934.3 531.8 L936.9 535.9 L939.6 540.0 L942.3 544.2 L944.9 548.3 L947.6 552.5 L950.3 556.6 L952.9 560.7 L955.6 564.9 L958.3 569.0 L961.0 573.2 L963.6 577.3 L966.3 581.4 L969.0 585.6 L971.6 589.7"/>
<path d="M224.6 207.9 L228.6 206.6 L232.8 205.2 L237.2 203.9 L241.7 202.6 L246.3 201.3 L250.8 200.1 L255.2 199.0 L259.6 197.9 L263.7 196.9 L267.6 196.0 L271.3 195.2 L274.9 194.5 L278.4 193.9 L281.8 193.3 L285.0 192.8 L288.2 192.4 L291.2 192.0 L294.2 191.6 L297.1 191.3 L299.9 190.9 L302.5 190.6 L305.0 190.3 L307.3 190.1 L309.5 189.9 L311.7 189.8 L313.8 189.6 L315.9 189.5 L318.1 189.4 L320.3 189.3 L322.7 189.1 L325.3 189.0 L327.9 188.8 L330.6 188.7 L333.4 188.5 L336.2 188.4 L339.0 188.3 L341.7 188.2 L344.4 188.1 L346.9 188.0 L349.4 188.0 L351.6 188.0 L353.7 188.1 L355.6 188.1 L357.4 188.2 L359.2 188.3 L361.1 188.4 L363.1 188.6 L365.2 188.8 L367.5 188.9 L370.1 189.1 L373.0 189.3 L376.2 189.6 L379.6 189.8 L383.1 190.0 L386.8 190.3 L390.5 190.6 L394.1 190.9 L397.7 191.3 L401.1 191.6 L404.2 192.0 L407.2 192.5 L409.8 192.9 L412.4 193.4 L414.8 193.8 L417.2 194.4 L419.7 194.9 L422.2 195.5 L424.9 196.1 L427.8 196.8 L430.9 197.5 L434.4 198.3 L438.2 199.2 L442.3 200.1 L446.5 201.1 L450.7 202.1 L455.0 203.2 L459.3 204.2 L463.4 205.2 L467.3 206.2 L470.9 207.2 L474.0 208.0 L476.5 208.7 L478.7 209.3 L480.7 209.8 L482.7 210.4 L484.9 211.1 L487.6 212.0 L490.9 213.0 L495.0 214.3 L500.1 216.0 L506.6 218.0 L514.2 220.5 L522.8 223.3 L532.1 226.3 L541.7 229.4 L551.4 232.6 L561.0 235.7 L570.0 238.7 L578.2 241.4 L585.4 243.8 L591.6 245.8 L597.0 247.7 L601.8 249.3 L606.2 250.8 L610.3 252.3 L614.2 253.7 L618.1 255.1 L622.3 256.6 L626.7 258.2 L631.6 260.0 L636.9 261.9 L642.4 263.9 L648.1 265.9 L653.9 268.0 L659.8 270.1 L665.7 272.3 L671.6 274.5 L677.5 276.8 L683.3 279.2 L689.0 281.6 L694.5 284.1 L700.1 286.7 L705.7 289.4 L711.3 292.1 L716.8 294.9 L722.3 297.7 L727.7 300.6 L733.0 303.4 L738.2 306.3 L743.3 309.2"/>
</g>
<path d="M173.6 281.8 L174.2 281.6 L175.0 281.5 L176.0 281.4 L177.2 281.3 L178.5 281.1 L180.0 280.8 L181.7 280.4 L183.5 279.8 L185.5 279.1 L187.5 278.1 L189.8 277.0 L192.1 275.6 L194.6 274.0 L197.2 272.3 L199.9 270.6 L202.7 268.8 L205.6 267.0 L208.4 265.2 L211.3 263.5 L214.2 262.0 L217.1 260.5 L220.1 259.1 L223.1 257.7 L226.2 256.3 L229.3 254.9 L232.5 253.5 L235.8 252.2 L239.1 250.9 L242.5 249.6 L246.0 248.4 L249.7 247.1 L253.6 245.9 L257.6 244.7 L261.7 243.5 L265.9 242.3 L270.0 241.2 L274.1 240.1 L278.0 239.1 L281.8 238.2 L285.4 237.3 L288.7 236.6 L292.0 235.9 L295.1 235.3 L298.1 234.8 L301.0 234.3 L303.9 233.8 L306.6 233.4 L309.3 233.1 L312.0 232.7 L314.5 232.4 L317.0 232.1 L319.2 231.8 L321.4 231.6 L323.5 231.5 L325.5 231.4 L327.5 231.2 L329.5 231.1 L331.5 231.0 L333.6 230.9 L335.9 230.8 L338.1 230.7 L340.5 230.5 L342.9 230.4 L345.3 230.2 L347.7 230.1 L350.1 230.0 L352.5 229.9 L354.8 229.8 L357.1 229.7 L359.2 229.7 L361.2 229.7 L363.1 229.7 L364.8 229.8 L366.5 229.9 L368.2 230.0 L369.9 230.1 L371.7 230.2 L373.7 230.4 L375.9 230.6 L378.3 230.8 L381.0 231.0 L383.9 231.3 L387.1 231.5 L390.3 231.8 L393.7 232.1 L397.1 232.5 L400.4 232.8 L403.7 233.1 L406.7 233.5 L409.6 233.9 L412.1 234.2 L414.5 234.6 L416.6 234.9 L418.7 235.3 L420.7 235.6 L422.7 236.1 L424.9 236.5 L427.2 237.0 L429.7 237.6 L432.6 238.2 L435.8 239.0 L439.4 239.8 L443.1 240.7 L447.1 241.7 L451.1 242.7 L455.2 243.8 L459.2 244.8 L463.1 245.9 L466.8 246.9 L470.2 247.8 L473.2 248.6 L475.5 249.3 L477.6 249.9 L479.4 250.5 L481.3 251.1 L483.5 251.8 L486.1 252.6 L489.3 253.6 L493.3 254.9 L498.4 256.6 L504.8 258.6 L512.4 261.0 L520.9 263.8 L530.1 266.7 L539.7 269.8 L549.3 272.9 L558.8 276.0 L567.7 278.9 L575.9 281.5 L583.0 283.9 L589.0 285.9 L594.3 287.6 L599.1 289.2 L603.3 290.6 L607.3 291.9 L611.1 293.2 L614.9 294.5 L618.8 295.9 L623.0 297.4 L627.7 299.1 L632.8 301.0 L638.0 302.9 L643.4 304.9 L648.9 307.0 L654.5 309.1 L660.0 311.3 L665.6 313.5 L671.1 315.7 L676.5 318.0 L681.7 320.3 L686.9 322.6 L692.1 325.0 L697.2 327.4 L702.2 329.9 L707.3 332.4 L712.2 335.0 L717.1 337.5 L721.9 340.1 L726.7 342.7 L731.3 345.3 L735.9 347.9 L740.5 350.6 L745.1 353.3 L749.5 356.1 L753.9 358.9 L758.2 361.7 L762.4 364.4 L766.3 367.0 L770.1 369.5 L773.6 371.9 L776.1 373.9 L778.7 375.8 L781.3 377.8 L783.9 379.8 L786.5 381.8 L789.1 383.8 L791.6 385.8 L794.2 387.8 L796.8 389.8 L799.3 391.7 L804.7 396.3 L810.1 401.0 L815.5 405.7 L820.9 410.3 L826.3 415.0 L831.7 419.7 L837.1 424.4 L842.5 429.0 L847.9 433.7 L853.2 438.3 L855.8 441.4 L858.6 444.8 L861.3 448.1 L864.1 451.5 L866.9 454.9 L869.7 458.2 L872.5 461.6 L875.2 464.9 L878.0 468.3 L880.8 471.7 L884.3 475.5 L887.8 479.3 L891.2 483.0 L894.6 486.8 L898.1 490.6 L901.5 494.3 L905.0 498.1 L908.4 501.8 L911.8 505.6 L915.1 509.2 L917.3 512.8 L919.6 516.5 L922.0 520.3 L924.3 524.1 L926.6 527.9 L929.0 531.7 L931.3 535.5 L933.6 539.3 L936.0 543.1 L938.3 546.9 L941.1 551.1 L943.9 555.3 L946.7 559.4 L949.5 563.6 L952.3 567.8 L955.1 571.9 L957.9 576.1 L960.7 580.2 L963.5 584.4 L966.3 588.6 L978.0 599.5 L986.3 600.0" fill="none" stroke="#222" stroke-width="0.7" stroke-opacity="0.8"/>
<g fill="none" stroke="#111" stroke-width="0.9">
<path d="M151.5 176.5 L114.8 207.6 L114.8 232.0 L136.0 263.4 L165.0 238.6"/>
<path d="M151.5 176.5 L151.5 202.2 L114.8 232.0"/>
<path d="M151.5 202.2 L175.9 254.5 L186.6 276.7"/>
<path d="M165.0 238.6 L144.4 253.1 L156.4 270.5 L174.8 255.1"/>
<path d="M173.3 278.5 L176.0 282.0 L186.6 277.5"/>
<path d="M448.4 182.0 L446.5 154.3 L410.2 185.5 L411.8 213.2 L422.7 205.0 L423.5 221.3 L440.3 207.5 L438.7 192.0 L448.4 182.0"/>
<path d="M410.2 185.5 L438.7 192.0 L422.7 205.0"/>
<path d="M429.7 214.0 L429.7 236.7 L435.7 234.3 L435.4 214.8"/>
<path d="M706.9 267.6 L711.0 240.0 L674.4 271.3 L670.3 298.2 L680.1 290.0 L677.6 305.0 L693.9 291.7 L697.2 275.7 L706.9 267.6"/>
<path d="M674.4 271.3 L697.2 275.7 L680.1 290.0"/>
<path d="M683.3 298.2 L680.9 317.7 L685.0 317.7 L687.7 297.4"/>
<path d="M1018.9 504.8 L1036.6 489.7 L1036.6 563.0 L1018.9 578.8"/>
<path d="M1018.9 504.8 L1000.4 520.2 L1000.4 591.8"/>
<path d="M1036.6 563.0 L1022.0 572.0 L1000.4 591.8 L986.3 600.0 L978.0 597.7"/>
<path d="M956.7 492.5 L1000.4 520.2"/>
<path d="M968.5 587.1 L1000.4 551.6"/>
<path d="M963.3 476.8 L1018.9 563.0"/>
</g>
<g fill="none" stroke="#222" stroke-width="0.9" stroke-dasharray="1 1">
<path d="M429.2 169.5 L431.0 198.7 L432.1 215.3"/>
<path d="M692.6 255.9 L688.2 282.7 L685.4 298.6"/>
</g>
<line x1="210.1" y1="180.3" x2="245.2" y2="245.9" stroke="#000" stroke-width="2.4" stroke-linecap="round"/>
<line x1="174.7" y1="255.2" x2="186.4" y2="275.8" stroke="#000" stroke-width="2.4" stroke-linecap="round"/>
<line x1="400.4" y1="163.9" x2="409.9" y2="231.3" stroke="#000" stroke-width="2.4" stroke-linecap="round"/>
<line x1="586.5" y1="217.0" x2="583.8" y2="281.4" stroke="#000" stroke-width="2.4" stroke-linecap="round"/>
<line x1="750.4" y1="285.3" x2="732.6" y2="343.0" stroke="#000" stroke-width="2.3" stroke-linecap="round"/>
<line x1="893.0" y1="394.5" x2="855.0" y2="436.4" stroke="#000" stroke-width="2" stroke-linecap="round"/>
<line x1="970.5" y1="472.0" x2="917.2" y2="507.6" stroke="#000" stroke-width="2.3" stroke-linecap="round"/>
<line x1="985.1" y1="580.5" x2="968.5" y2="587.1" stroke="#000" stroke-width="2.2" stroke-linecap="round"/>
<path d="M911.4 379.3L893 394.5L876.2 413.3" stroke="#000" stroke-width="1.1" fill="none"/>
<path d="M133.2 191.4 L133.2 217.1" stroke="#121296" stroke-width="2.3" fill="none"/><path d="M133.2 192.6 L128.6 194.4 L132.0 196.8 Z" fill="#121296" stroke="#121296" stroke-width=".6" stroke-linejoin="round"/><path d="M133.2 199.0 L128.6 200.8 L132.0 203.2 Z" fill="#121296" stroke="#121296" stroke-width=".6" stroke-linejoin="round"/><path d="M133.2 205.5 L128.6 207.3 L132.0 209.7 Z" fill="#121296" stroke="#121296" stroke-width=".6" stroke-linejoin="round"/><path d="M133.2 211.9 L128.6 213.7 L132.0 216.1 Z" fill="#121296" stroke="#121296" stroke-width=".6" stroke-linejoin="round"/>
<path d="M133.2 217.1 L152.5 247.9" stroke="#121296" stroke-width="2.3" fill="none"/><path d="M134.2 218.7 L131.2 222.6 L135.4 222.9 Z" fill="#121296" stroke="#121296" stroke-width=".6" stroke-linejoin="round"/><path d="M138.0 224.8 L135.1 228.8 L139.3 229.0 Z" fill="#121296" stroke="#121296" stroke-width=".6" stroke-linejoin="round"/><path d="M141.9 231.0 L139.0 235.0 L143.1 235.2 Z" fill="#121296" stroke="#121296" stroke-width=".6" stroke-linejoin="round"/><path d="M145.8 237.1 L142.8 241.1 L147.0 241.3 Z" fill="#121296" stroke="#121296" stroke-width=".6" stroke-linejoin="round"/><path d="M149.6 243.3 L146.7 247.3 L150.8 247.5 Z" fill="#121296" stroke="#121296" stroke-width=".6" stroke-linejoin="round"/>
<path d="M152.5 247.9 L173.1 279.2" stroke="#121296" stroke-width="2.3" fill="none"/><path d="M153.6 249.6 L150.8 253.6 L154.9 253.8 Z" fill="#121296" stroke="#121296" stroke-width=".6" stroke-linejoin="round"/><path d="M157.7 255.8 L154.9 259.9 L159.0 260.0 Z" fill="#121296" stroke="#121296" stroke-width=".6" stroke-linejoin="round"/><path d="M161.9 262.1 L159.0 266.1 L163.2 266.3 Z" fill="#121296" stroke="#121296" stroke-width=".6" stroke-linejoin="round"/><path d="M166.0 268.4 L163.1 272.4 L167.3 272.5 Z" fill="#121296" stroke="#121296" stroke-width=".6" stroke-linejoin="round"/><path d="M170.1 274.6 L167.2 278.7 L171.4 278.8 Z" fill="#121296" stroke="#121296" stroke-width=".6" stroke-linejoin="round"/>
<path d="M1018.9 504.8 L1018.9 578.8" stroke="#121296" stroke-width="2.3" fill="none"/><path d="M1018.9 506.2 L1023.5 508.0 L1020.1 510.4 Z" fill="#121296" stroke="#121296" stroke-width=".6" stroke-linejoin="round"/><path d="M1018.9 513.0 L1023.5 514.8 L1020.1 517.2 Z" fill="#121296" stroke="#121296" stroke-width=".6" stroke-linejoin="round"/><path d="M1018.9 519.7 L1023.5 521.5 L1020.1 523.9 Z" fill="#121296" stroke="#121296" stroke-width=".6" stroke-linejoin="round"/><path d="M1018.9 526.4 L1023.5 528.2 L1020.1 530.6 Z" fill="#121296" stroke="#121296" stroke-width=".6" stroke-linejoin="round"/><path d="M1018.9 533.2 L1023.5 535.0 L1020.1 537.4 Z" fill="#121296" stroke="#121296" stroke-width=".6" stroke-linejoin="round"/><path d="M1018.9 539.9 L1023.5 541.7 L1020.1 544.1 Z" fill="#121296" stroke="#121296" stroke-width=".6" stroke-linejoin="round"/><path d="M1018.9 546.6 L1023.5 548.4 L1020.1 550.8 Z" fill="#121296" stroke="#121296" stroke-width=".6" stroke-linejoin="round"/><path d="M1018.9 553.3 L1023.5 555.1 L1020.1 557.5 Z" fill="#121296" stroke="#121296" stroke-width=".6" stroke-linejoin="round"/><path d="M1018.9 560.1 L1023.5 561.9 L1020.1 564.3 Z" fill="#121296" stroke="#121296" stroke-width=".6" stroke-linejoin="round"/><path d="M1018.9 566.8 L1023.5 568.6 L1020.1 571.0 Z" fill="#121296" stroke="#121296" stroke-width=".6" stroke-linejoin="round"/><path d="M1018.9 573.5 L1023.5 575.3 L1020.1 577.7 Z" fill="#121296" stroke="#121296" stroke-width=".6" stroke-linejoin="round"/>
<path d="M1018.9 578.8 L980.4 597.0" stroke="#121296" stroke-width="2.3" fill="none"/><path d="M1016.4 580.0 L1016.7 584.9 L1013.1 582.9 Z" fill="#121296" stroke="#121296" stroke-width=".6" stroke-linejoin="round"/><path d="M1008.7 583.6 L1009.0 588.6 L1005.4 586.5 Z" fill="#121296" stroke="#121296" stroke-width=".6" stroke-linejoin="round"/><path d="M1001.0 587.3 L1001.3 592.2 L997.7 590.2 Z" fill="#121296" stroke="#121296" stroke-width=".6" stroke-linejoin="round"/><path d="M993.3 590.9 L993.6 595.8 L990.0 593.8 Z" fill="#121296" stroke="#121296" stroke-width=".6" stroke-linejoin="round"/><path d="M985.6 594.6 L985.9 599.5 L982.3 597.4 Z" fill="#121296" stroke="#121296" stroke-width=".6" stroke-linejoin="round"/>
<g fill="url(#bd)" opacity="0.82">
<circle cx="133.2" cy="191.4" r="3.1"/>
<circle cx="152.5" cy="247.9" r="3.1"/>
<circle cx="162.7" cy="262.5" r="3.1"/>
<circle cx="173.1" cy="279.2" r="3.1"/>
<circle cx="165.4" cy="239.1" r="3.1"/>
<circle cx="174.7" cy="255.2" r="3.1"/>
<circle cx="186.4" cy="275.8" r="3.1"/>
<circle cx="189.8" cy="224.2" r="3.1"/>
<circle cx="199.7" cy="239.7" r="3.1"/>
<circle cx="213.0" cy="259.7" r="3.1"/>
<circle cx="210.1" cy="180.3" r="3.1"/>
<circle cx="225.2" cy="209.1" r="3.1"/>
<circle cx="233.6" cy="225.3" r="3.1"/>
<circle cx="245.2" cy="245.9" r="3.1"/>
<circle cx="256.0" cy="167.7" r="3.1"/>
<circle cx="268.1" cy="197.2" r="3.1"/>
<circle cx="275.5" cy="213.6" r="3.1"/>
<circle cx="284.8" cy="234.8" r="3.1"/>
<circle cx="289.9" cy="162.8" r="3.1"/>
<circle cx="300.3" cy="192.1" r="3.1"/>
<circle cx="306.5" cy="208.7" r="3.1"/>
<circle cx="314.2" cy="229.8" r="3.1"/>
<circle cx="313.6" cy="161.1" r="3.1"/>
<circle cx="323.1" cy="190.3" r="3.1"/>
<circle cx="329.1" cy="206.9" r="3.1"/>
<circle cx="335.7" cy="228.2" r="3.1"/>
<circle cx="341.5" cy="159.5" r="3.1"/>
<circle cx="349.7" cy="189.2" r="3.1"/>
<circle cx="354.1" cy="206.0" r="3.1"/>
<circle cx="359.2" cy="227.1" r="3.1"/>
<circle cx="364.5" cy="161.1" r="3.1"/>
<circle cx="370.3" cy="190.3" r="3.1"/>
<circle cx="374.1" cy="207.1" r="3.1"/>
<circle cx="378.5" cy="228.2" r="3.1"/>
<circle cx="400.4" cy="163.9" r="3.1"/>
<circle cx="404.4" cy="193.2" r="3.1"/>
<circle cx="406.6" cy="210.5" r="3.1"/>
<circle cx="409.9" cy="231.3" r="3.1"/>
<circle cx="429.2" cy="169.5" r="3.1"/>
<circle cx="431.0" cy="198.7" r="3.1"/>
<circle cx="432.1" cy="215.3" r="3.1"/>
<circle cx="433.2" cy="235.7" r="3.1"/>
<circle cx="470.4" cy="179.9" r="3.1"/>
<circle cx="470.9" cy="208.3" r="3.1"/>
<circle cx="470.9" cy="245.3" r="3.1"/>
<circle cx="500.8" cy="189.2" r="3.1"/>
<circle cx="500.1" cy="217.1" r="3.1"/>
<circle cx="499.7" cy="233.5" r="3.1"/>
<circle cx="499.2" cy="254.1" r="3.1"/>
<circle cx="586.5" cy="217.0" r="3.1"/>
<circle cx="585.4" cy="244.9" r="3.1"/>
<circle cx="584.7" cy="261.3" r="3.1"/>
<circle cx="583.8" cy="281.4" r="3.1"/>
<circle cx="633.5" cy="233.1" r="3.1"/>
<circle cx="631.5" cy="261.1" r="3.1"/>
<circle cx="630.4" cy="276.8" r="3.1"/>
<circle cx="628.6" cy="296.7" r="3.1"/>
<circle cx="692.7" cy="255.9" r="3.1"/>
<circle cx="688.8" cy="282.7" r="3.1"/>
<circle cx="685.4" cy="298.6" r="3.1"/>
<circle cx="682.8" cy="317.9" r="3.1"/>
<circle cx="750.4" cy="285.3" r="3.1"/>
<circle cx="743.0" cy="310.2" r="3.1"/>
<circle cx="737.5" cy="324.6" r="3.1"/>
<circle cx="732.6" cy="343.0" r="3.1"/>
<circle cx="800.0" cy="317.3" r="3.1"/>
<circle cx="789.5" cy="340.0" r="3.1"/>
<circle cx="783.2" cy="353.7" r="3.1"/>
<circle cx="775.1" cy="369.8" r="3.1"/>
<circle cx="831.6" cy="341.4" r="3.1"/>
<circle cx="818.7" cy="362.5" r="3.1"/>
<circle cx="810.5" cy="374.7" r="3.1"/>
<circle cx="801.0" cy="389.7" r="3.1"/>
<circle cx="893.0" cy="394.5" r="3.1"/>
<circle cx="876.2" cy="413.3" r="3.1"/>
<circle cx="866.8" cy="423.7" r="3.1"/>
<circle cx="855.0" cy="436.4" r="3.1"/>
<circle cx="928.6" cy="435.4" r="3.1"/>
<circle cx="970.5" cy="472.0" r="3.1"/>
<circle cx="943.7" cy="490.0" r="3.1"/>
<circle cx="932.0" cy="498.1" r="3.1"/>
<circle cx="917.2" cy="507.6" r="3.1"/>
<circle cx="1018.9" cy="504.8" r="3.1"/>
<circle cx="985.1" cy="580.5" r="3.1"/>
<circle cx="968.5" cy="587.1" r="3.1"/>
<circle cx="1005.2" cy="585.2" r="3.1"/>
<circle cx="992.2" cy="591.8" r="3.1"/>
<circle cx="980.4" cy="597.0" r="3.1"/>
<circle cx="133.2" cy="217.1" r="3.1"/>
<circle cx="144.3" cy="208.7" r="3.1"/>
<circle cx="421.0" cy="168.8" r="3.1"/>
<circle cx="543.9" cy="202.8" r="3.1"/>
<circle cx="550.4" cy="206.5" r="3.1"/>
<circle cx="663.3" cy="244.3" r="3.1"/>
<circle cx="678.1" cy="251.0" r="3.1"/>
<circle cx="1018.9" cy="578.8" r="3.1"/>
<circle cx="989.8" cy="561.1" r="3.1"/>
<circle cx="998.1" cy="575.3" r="3.1"/>
</g>
<g stroke="#111" stroke-width="1" fill="none"><path d="M64.1 572.3L80.8 576.7M64.1 572.3L55.9 579.2M64.1 572.3V586.9" transform="translate(0.2 0.3)"/></g>
<g fill="#111" transform="translate(0.2 0.3)"><path d="M81.5 577l-4.200-2.800-.8 3z"/><path d="M55 580l1.200-3.800 2.200 2.500z"/><path d="M64.1 588l-1.700-3.800h3.400z"/></g>
<g font-family="Liberation Sans,sans-serif" font-size="9.500" fill="#222"><text x="84.700" y="582.300">X</text><text x="46.200" y="588.500" font-size="8.500">Y</text><text x="61.100" y="599.600">Z</text></g>
</svg></div>
  <div id="vs" class="abs"><div class="thumb" style="left:1px;top:164px;width:15px;height:151px"></div>
    <svg style="left:4px;top:0px" width="10" height="480" viewBox="0 0 10 480" fill="none" stroke="#505050" stroke-width="1.7"><path d="M0.500 10.500L4.500 6.500L8.500 10.500"/><path d="M0.500 468.500L4.500 472.500L8.500 468.500"/></svg>
  </div>
  <div id="hs" class="abs"><div class="thumb" style="left:363px;top:1px;width:376px;height:15px"></div>
    <svg style="left:0px;top:4px" width="1104" height="10" viewBox="0 0 1104 10" fill="none" stroke="#505050" stroke-width="1.700"><path d="M10 .5L6 4.500L10 8.500"/><path d="M1092.500 .5L1096.500 4.500L1092.500 8.500"/></svg>
  </div>
  <div id="corner" class="abs"></div>
  <!-- left vertical tab -->
  <div class="vt" style="left:0px;top:82px;width:21px;height:141px;border-top:none;border-left:none"><span style="top:22px;left:2px">Dokumenten-Ansicht</span><svg style="left:5px;top:3px" width="14" height="14" viewBox="0 0 16 16"><rect x=".75" y=".75" width="14.500" height="14.500" fill="#fff" stroke="#111" stroke-width="1.500"/><rect x="1" y="1" width="14" height="2.500" fill="#15157a"/><path d="M4 6h3M9 6h3M4 8.500h3M9 8.500h3M4 11h3M9 11h3" stroke="#15157a" stroke-width="1.500"/></svg></div>
  <!-- right vertical tabs -->
  <div class="vt" style="left:1148px;top:81px;width:21px;height:109px"><span style="top:20px;left:2px">Projekt-Ansicht</span><svg style="left:2px;top:2px" width="15" height="15" viewBox="0 0 16 16"><rect x="4" y=".5" width="11" height="8" fill="#fff" stroke="#15157a" stroke-width="1"/><rect x="4" y=".5" width="11" height="2" fill="#c8b070"/><rect x="1" y="4" width="9" height="7" fill="#d8e4f8" stroke="#15157a" stroke-width="1"/><rect x="1" y="4" width="9" height="2" fill="#3030b0"/><rect x="5" y="8" width="10" height="7.500" fill="#fff" stroke="#15157a" stroke-width="1"/></svg></div>
  <div class="vt" style="left:1148px;top:190px;width:21px;height:134px"><span style="top:20px;left:2px;letter-spacing:.2px">Lastfallfilter-Ansicht</span><svg style="left:2px;top:2px" width="15" height="15" viewBox="0 0 16 16"><rect x=".5" y="1.500" width="15" height="9" fill="#e8e4d0" stroke="#111" stroke-width="1"/><path d="M.5 3.500h15M4 1.500v9M8 1.500v9M12 1.500v9" stroke="#111" stroke-width="1"/><path d="M8 11h7l-2.500 3v2l-2-1v-1z" fill="#d8c8a0" stroke="#a89868" stroke-width=".6"/></svg></div>
  <div class="vt" style="left:1148px;top:324px;width:21px;height:138px"><span style="top:20px;left:2px">Sichtbarkeits-Ansicht</span><svg style="left:3px;top:3px" width="15" height="14" viewBox="0 0 15 14"><rect x="1" y="1" width="13" height="12" fill="#dcdcdc" stroke="#8a8a8a" stroke-width="1"/><path d="M1 13V1h13" fill="none" stroke="#f4f4f4" stroke-width="1"/><path d="M3.500 6.500l2.500 3 5-5.500" fill="none" stroke="#333" stroke-width="1.500"/></svg></div>
  <!-- bottom tabs -->
  <div class="btab" style="left:24px;width:125px"><span style="left:21px;letter-spacing:.25px">Meldungs-Ansicht</span><svg style="left:2px;top:3px" width="15" height="13" viewBox="0 0 16 14"><rect x=".75" y=".75" width="14.500" height="12.500" fill="#fff" stroke="#111" stroke-width="1.500"/><rect x="1" y="1" width="14" height="3" fill="#15157a"/><path d="M3 6.500h2M6 6.500h2M9 6.500h1.500M12 6.500h1M3 8h1M6 8h2M10 8h3M3 10.500h3M7 10.500h1M9 10.500h1M12 10.500h1" stroke="#222" stroke-width="1.200"/></svg></div>
  <div class="btab" style="left:150px;width:115px"><span style="left:20px;letter-spacing:.12px">Tabellen-Ansicht</span><svg style="left:2px;top:3px" width="14" height="13" viewBox="0 0 16 15"><rect x=".75" y=".75" width="14.500" height="13.500" fill="#fff" stroke="#111" stroke-width="1.500"/><rect x="1" y="1" width="14" height="3" fill="#15157a"/><path d="M4.500 4v10M8 4v10M11.500 4v10" stroke="#111" stroke-width="1"/></svg></div>
  <div id="status" class="abs"><svg style="left:1155px;top:9px" width="12" height="12" viewBox="0 0 12 12" fill="#7f9fce"><rect x="8" y="0" width="2" height="2"/><rect x="4" y="4" width="2" height="2"/><rect x="8" y="4" width="2" height="2"/><rect x="0" y="8" width="2" height="2"/><rect x="4" y="8" width="2" height="2"/><rect x="8" y="8" width="2" height="2"/></svg></div>
</div>
</body>
</html>
